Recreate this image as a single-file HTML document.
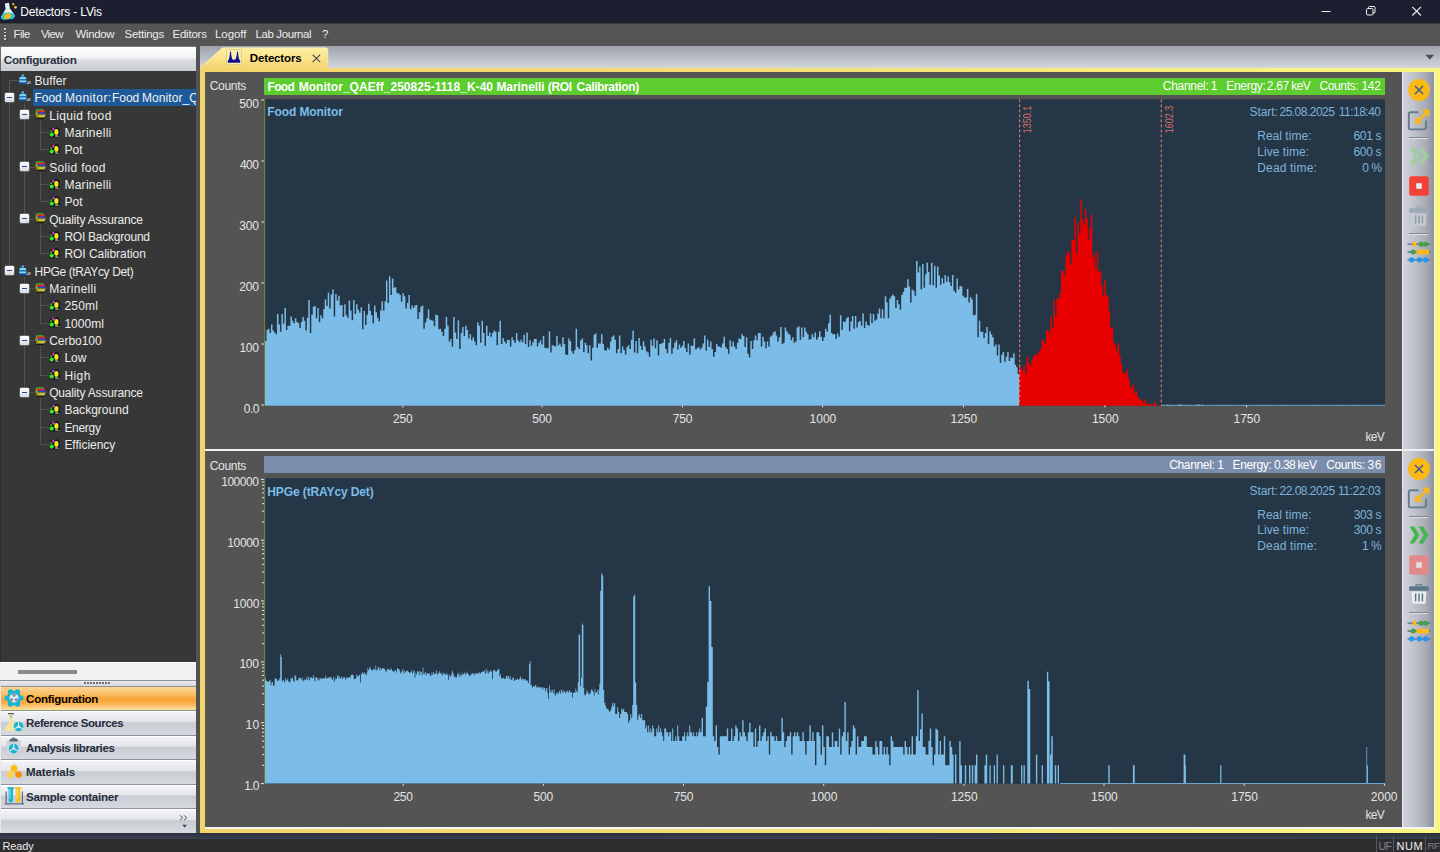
<!DOCTYPE html>
<html lang="en"><head><meta charset="utf-8"><title>Detectors - LVis</title><style>
*{margin:0;padding:0;box-sizing:border-box}
html,body{width:1440px;height:852px;overflow:hidden;background:#545454}
body{font-family:"Liberation Sans",sans-serif;font-size:12px;position:relative}
.ab{position:absolute}
.tx{position:absolute;white-space:nowrap;line-height:16px;height:16px}
</style></head><body>
<div class="ab" style="left:0;top:0;width:1440px;height:22.5px;background:#1b1f2f"></div>
<svg class="ab" style="left:0;top:1px" width="18" height="20" viewBox="0 0 18 20"><path d="M4.800 2.400L9 1.800L9.900 7.600L14.800 14.200Q14.600 17.600 11 18L3.400 18.400Q.6 18.200 1.200 15.600L5.600 8Z" fill="#e4f0f6"/><path d="M2.800 12.400L1.200 15.600Q.6 18.200 3.400 18.400L11 18Q14.400 17.600 14.800 14.400L13.600 12.800Q8 10.400 2.800 12.400Z" fill="#1fc1dd"/><ellipse cx="7.600" cy="15" rx="3.700" ry="2.700" fill="#fdbd16" transform="rotate(-14 7.600 15)"/><path d="M10.200 8.400L13.800 13.200L11 10.400Z" fill="#ffffff"/><circle cx="13.200" cy="3.200" r="1.150" fill="#fdbd16"/><circle cx="15.500" cy="6.300" r="1.400" fill="#fdc825"/></svg>
<svg class="ab" style="left:1310px;top:0" width="130" height="22" viewBox="0 0 130 22"><path d="M11.5 11.5H20.5" stroke="#f2f2f2" stroke-width="1"/><rect x="56.5" y="8.5" width="6.5" height="6.5" rx="1.200" fill="none" stroke="#f2f2f2" stroke-width="1"/><path d="M58.5 8.500V7.500Q58.500 6.500 59.500 6.500H64Q65 6.500 65 7.500V12Q65 13 64 13H63" fill="none" stroke="#f2f2f2" stroke-width="1"/><path d="M102.300 6.800L111 15.500M111 6.800L102.300 15.500" stroke="#f2f2f2" stroke-width="1.100"/></svg>
<div class="ab" style="left:0;top:22.5px;width:1440px;height:23px;background:#555555"></div>
<div class="ab" style="left:0;top:22.5px;width:1440px;height:1px;background:#3e3e3e"></div>
<div class="ab" style="left:3.900px;top:28.2px;width:1.800px;height:1.700px;background:#c9c9c9;box-shadow:.5px .5px 0 #3a3a3a"></div>
<div class="ab" style="left:3.900px;top:31.6px;width:1.800px;height:1.700px;background:#c9c9c9;box-shadow:.5px .5px 0 #3a3a3a"></div>
<div class="ab" style="left:3.900px;top:34.9px;width:1.800px;height:1.700px;background:#c9c9c9;box-shadow:.5px .5px 0 #3a3a3a"></div>
<div class="ab" style="left:3.900px;top:38.2px;width:1.800px;height:1.700px;background:#c9c9c9;box-shadow:.5px .5px 0 #3a3a3a"></div>
<div class="ab" style="left:0;top:46px;width:196.4px;height:25px;background:linear-gradient(#fdfdfd 0%,#f1f2f4 45%,#d9dbe0 55%,#c9ccd2 100%);border-left:1px solid #6a6a6a;border-top:1px solid #787878"></div>
<div class="ab" style="left:0;top:71px;width:196.4px;height:591.4px;background:#373737;border-left:1.400px solid #2a2a2a"></div>
<div class="ab" style="left:195.800px;top:71px;width:1.200px;height:591px;background:#6c6c6c"></div>
<div class="ab" style="left:33px;top:88.6px;width:163.2px;height:17.4px;background:#1e5a99"></div>
<div class="ab" style="left:9.0px;top:80.0px;width:1px;height:190.7px;background:#525252"></div>
<div class="ab" style="left:9.0px;top:80.0px;width:9.0px;height:1px;background:#525252"></div>
<div class="ab" style="left:24.0px;top:103.3px;width:1px;height:115.3px;background:#525252"></div>
<div class="ab" style="left:24.0px;top:276.7px;width:1px;height:115.3px;background:#525252"></div>
<div class="ab" style="left:29.0px;top:114.7px;width:5.0px;height:1px;background:#525252"></div>
<div class="ab" style="left:39.5px;top:132.0px;width:10.5px;height:1px;background:#525252"></div>
<div class="ab" style="left:39.5px;top:149.3px;width:10.5px;height:1px;background:#525252"></div>
<div class="ab" style="left:29.0px;top:166.7px;width:5.0px;height:1px;background:#525252"></div>
<div class="ab" style="left:39.5px;top:184.0px;width:10.5px;height:1px;background:#525252"></div>
<div class="ab" style="left:39.5px;top:201.3px;width:10.5px;height:1px;background:#525252"></div>
<div class="ab" style="left:29.0px;top:218.7px;width:5.0px;height:1px;background:#525252"></div>
<div class="ab" style="left:39.5px;top:236.0px;width:10.5px;height:1px;background:#525252"></div>
<div class="ab" style="left:39.5px;top:253.3px;width:10.5px;height:1px;background:#525252"></div>
<div class="ab" style="left:29.0px;top:288.0px;width:5.0px;height:1px;background:#525252"></div>
<div class="ab" style="left:39.5px;top:305.3px;width:10.5px;height:1px;background:#525252"></div>
<div class="ab" style="left:39.5px;top:322.7px;width:10.5px;height:1px;background:#525252"></div>
<div class="ab" style="left:29.0px;top:340.0px;width:5.0px;height:1px;background:#525252"></div>
<div class="ab" style="left:39.5px;top:357.3px;width:10.5px;height:1px;background:#525252"></div>
<div class="ab" style="left:39.5px;top:374.7px;width:10.5px;height:1px;background:#525252"></div>
<div class="ab" style="left:29.0px;top:392.0px;width:5.0px;height:1px;background:#525252"></div>
<div class="ab" style="left:39.5px;top:409.3px;width:10.5px;height:1px;background:#525252"></div>
<div class="ab" style="left:39.5px;top:426.7px;width:10.5px;height:1px;background:#525252"></div>
<div class="ab" style="left:39.5px;top:444.0px;width:10.5px;height:1px;background:#525252"></div>
<div class="ab" style="left:39.5px;top:120.7px;width:1px;height:28.7px;background:#525252"></div>
<div class="ab" style="left:39.5px;top:172.7px;width:1px;height:28.7px;background:#525252"></div>
<div class="ab" style="left:39.5px;top:224.7px;width:1px;height:28.7px;background:#525252"></div>
<div class="ab" style="left:39.5px;top:294.0px;width:1px;height:28.7px;background:#525252"></div>
<div class="ab" style="left:39.5px;top:346.0px;width:1px;height:28.7px;background:#525252"></div>
<div class="ab" style="left:39.5px;top:398.0px;width:1px;height:46.0px;background:#525252"></div>
<svg class="ab" style="left:17.6px;top:74.1px" width="14" height="12" viewBox="0 0 14 12"><rect x="3.500" y="0.700" width="2.600" height="2.400" rx=".6" fill="#2a86d8"/><rect x="4.100" y="0.500" width="1.400" height="1.200" fill="#8fe6f8"/><path d="M2.300 3.100h5q.9 0 .9 1v1.200H1.400V4.100q0-1 .9-1z" fill="#6fdcf2"/><rect x="1.200" y="5.100" width="7.200" height="1.500" fill="#2e6fd2"/><rect x="1.200" y="6.500" width="7.200" height="1.500" fill="#7fe6f6"/><rect x="1.200" y="7.900" width="7.200" height="1.300" fill="#2e7fd8"/><rect x="1.200" y="9.100" width="7.200" height="1.200" rx=".3" fill="#1f3f9a"/><path d="M8.600 8.800h1.400v-1.600h2.600v2.800h-1v-1.800h-.6v1.800H8.600z" fill="#a9adb3"/></svg>
<div class="ab" style="left:5.0px;top:92.8px;width:9px;height:9px;background:linear-gradient(#ffffff,#d6dae2);border-radius:1px;box-shadow:0 0 0 0.5px #8a8e96"><div class="ab" style="left:2px;top:4px;width:5px;height:1px;background:#2d4a8a"></div></div>
<svg class="ab" style="left:17.6px;top:91.4px" width="14" height="12" viewBox="0 0 14 12"><rect x="3.500" y="0.700" width="2.600" height="2.400" rx=".6" fill="#2a86d8"/><rect x="4.100" y="0.500" width="1.400" height="1.200" fill="#8fe6f8"/><path d="M2.300 3.100h5q.9 0 .9 1v1.200H1.400V4.100q0-1 .9-1z" fill="#6fdcf2"/><rect x="1.200" y="5.100" width="7.200" height="1.500" fill="#2e6fd2"/><rect x="1.200" y="6.500" width="7.200" height="1.500" fill="#7fe6f6"/><rect x="1.200" y="7.900" width="7.200" height="1.300" fill="#2e7fd8"/><rect x="1.200" y="9.100" width="7.200" height="1.200" rx=".3" fill="#1f3f9a"/><path d="M8.600 8.800h1.400v-1.600h2.600v2.800h-1v-1.800h-.6v1.800H8.600z" fill="#a9adb3"/></svg>
<div class="ab" style="left:20.0px;top:110.2px;width:9px;height:9px;background:linear-gradient(#ffffff,#d6dae2);border-radius:1px;box-shadow:0 0 0 0.5px #8a8e96"><div class="ab" style="left:2px;top:4px;width:5px;height:1px;background:#2d4a8a"></div></div>
<svg class="ab" style="left:33.5px;top:108.4px" width="13" height="12" viewBox="0 0 13 12"><path d="M1.600 3.200Q1.600 1.300 3.600 1.300H8.400Q10 1.300 10.400 2.800H3.400V6Z" fill="#35c52e"/><rect x="3" y="2.400" width="8" height="2.300" fill="#e02a20"/><rect x="3.400" y="4.500" width="8.200" height="2.100" fill="#2848d0"/><path d="M0.800 4.800L2.600 9.800H10L12 6.400H4.200L3 4.200Z" fill="#a8a424"/><path d="M0.800 4.800L2.600 9.800H10L10.400 9.100H3.500L1.800 4.500Z" fill="#6f7414"/><path d="M4.600 7.200H11.400L10.400 8.800H5.200Z" fill="#d8c83a"/><path d="M2 10.100H10.200V10.900H2.600Z" fill="#16180a"/></svg>
<svg class="ab" style="left:49.4px;top:126.7px" width="12" height="12" viewBox="0 0 12 12"><path d="M1.600 1.200H5.400L6 0.600H9.400V2H10.600V10.400H0.600V4.600H1.600Z" fill="#141414"/><circle cx="4.400" cy="2.200" r="1.200" fill="#e63ae0"/><circle cx="2.700" cy="7.600" r="2.100" fill="#3be830"/><circle cx="2.200" cy="4.300" r="1" fill="#2fd028"/><ellipse cx="7.400" cy="4.900" rx="2.100" ry="2.900" fill="#ecec20"/><rect x="6.200" y="8.400" width="2.800" height="1.200" fill="#cfcfcf"/><rect x="8.800" y="9.300" width="1.600" height="0.900" fill="#8a8a8a"/></svg>
<svg class="ab" style="left:49.4px;top:144.0px" width="12" height="12" viewBox="0 0 12 12"><path d="M1.600 1.200H5.400L6 0.600H9.400V2H10.600V10.400H0.600V4.600H1.600Z" fill="#141414"/><circle cx="4.400" cy="2.200" r="1.200" fill="#e63ae0"/><circle cx="2.700" cy="7.600" r="2.100" fill="#3be830"/><circle cx="2.200" cy="4.300" r="1" fill="#2fd028"/><ellipse cx="7.400" cy="4.900" rx="2.100" ry="2.900" fill="#ecec20"/><rect x="6.200" y="8.400" width="2.800" height="1.200" fill="#cfcfcf"/><rect x="8.800" y="9.300" width="1.600" height="0.900" fill="#8a8a8a"/></svg>
<div class="ab" style="left:20.0px;top:162.2px;width:9px;height:9px;background:linear-gradient(#ffffff,#d6dae2);border-radius:1px;box-shadow:0 0 0 0.5px #8a8e96"><div class="ab" style="left:2px;top:4px;width:5px;height:1px;background:#2d4a8a"></div></div>
<svg class="ab" style="left:33.5px;top:160.4px" width="13" height="12" viewBox="0 0 13 12"><path d="M1.600 3.200Q1.600 1.300 3.600 1.300H8.400Q10 1.300 10.400 2.800H3.400V6Z" fill="#35c52e"/><rect x="3" y="2.400" width="8" height="2.300" fill="#e02a20"/><rect x="3.400" y="4.500" width="8.200" height="2.100" fill="#2848d0"/><path d="M0.800 4.800L2.600 9.800H10L12 6.400H4.200L3 4.200Z" fill="#a8a424"/><path d="M0.800 4.800L2.600 9.800H10L10.400 9.100H3.500L1.800 4.500Z" fill="#6f7414"/><path d="M4.600 7.200H11.400L10.400 8.800H5.200Z" fill="#d8c83a"/><path d="M2 10.100H10.200V10.900H2.600Z" fill="#16180a"/></svg>
<svg class="ab" style="left:49.4px;top:178.7px" width="12" height="12" viewBox="0 0 12 12"><path d="M1.600 1.200H5.400L6 0.600H9.400V2H10.600V10.400H0.600V4.600H1.600Z" fill="#141414"/><circle cx="4.400" cy="2.200" r="1.200" fill="#e63ae0"/><circle cx="2.700" cy="7.600" r="2.100" fill="#3be830"/><circle cx="2.200" cy="4.300" r="1" fill="#2fd028"/><ellipse cx="7.400" cy="4.900" rx="2.100" ry="2.900" fill="#ecec20"/><rect x="6.200" y="8.400" width="2.800" height="1.200" fill="#cfcfcf"/><rect x="8.800" y="9.300" width="1.600" height="0.900" fill="#8a8a8a"/></svg>
<svg class="ab" style="left:49.4px;top:196.0px" width="12" height="12" viewBox="0 0 12 12"><path d="M1.600 1.200H5.400L6 0.600H9.400V2H10.600V10.400H0.600V4.600H1.600Z" fill="#141414"/><circle cx="4.400" cy="2.200" r="1.200" fill="#e63ae0"/><circle cx="2.700" cy="7.600" r="2.100" fill="#3be830"/><circle cx="2.200" cy="4.300" r="1" fill="#2fd028"/><ellipse cx="7.400" cy="4.900" rx="2.100" ry="2.900" fill="#ecec20"/><rect x="6.200" y="8.400" width="2.800" height="1.200" fill="#cfcfcf"/><rect x="8.800" y="9.300" width="1.600" height="0.900" fill="#8a8a8a"/></svg>
<div class="ab" style="left:20.0px;top:214.2px;width:9px;height:9px;background:linear-gradient(#ffffff,#d6dae2);border-radius:1px;box-shadow:0 0 0 0.5px #8a8e96"><div class="ab" style="left:2px;top:4px;width:5px;height:1px;background:#2d4a8a"></div></div>
<svg class="ab" style="left:33.5px;top:212.4px" width="13" height="12" viewBox="0 0 13 12"><path d="M1.600 3.200Q1.600 1.300 3.600 1.300H8.400Q10 1.300 10.400 2.800H3.400V6Z" fill="#35c52e"/><rect x="3" y="2.400" width="8" height="2.300" fill="#e02a20"/><rect x="3.400" y="4.500" width="8.200" height="2.100" fill="#2848d0"/><path d="M0.800 4.800L2.600 9.800H10L12 6.400H4.200L3 4.200Z" fill="#a8a424"/><path d="M0.800 4.800L2.600 9.800H10L10.400 9.100H3.500L1.800 4.500Z" fill="#6f7414"/><path d="M4.600 7.200H11.400L10.400 8.800H5.200Z" fill="#d8c83a"/><path d="M2 10.100H10.200V10.900H2.600Z" fill="#16180a"/></svg>
<svg class="ab" style="left:49.4px;top:230.7px" width="12" height="12" viewBox="0 0 12 12"><path d="M1.600 1.200H5.400L6 0.600H9.400V2H10.600V10.400H0.600V4.600H1.600Z" fill="#141414"/><circle cx="4.400" cy="2.200" r="1.200" fill="#e63ae0"/><circle cx="2.700" cy="7.600" r="2.100" fill="#3be830"/><circle cx="2.200" cy="4.300" r="1" fill="#2fd028"/><ellipse cx="7.400" cy="4.900" rx="2.100" ry="2.900" fill="#ecec20"/><rect x="6.200" y="8.400" width="2.800" height="1.200" fill="#cfcfcf"/><rect x="8.800" y="9.300" width="1.600" height="0.900" fill="#8a8a8a"/></svg>
<svg class="ab" style="left:49.4px;top:248.0px" width="12" height="12" viewBox="0 0 12 12"><path d="M1.600 1.200H5.400L6 0.600H9.400V2H10.600V10.400H0.600V4.600H1.600Z" fill="#141414"/><circle cx="4.400" cy="2.200" r="1.200" fill="#e63ae0"/><circle cx="2.700" cy="7.600" r="2.100" fill="#3be830"/><circle cx="2.200" cy="4.300" r="1" fill="#2fd028"/><ellipse cx="7.400" cy="4.900" rx="2.100" ry="2.900" fill="#ecec20"/><rect x="6.200" y="8.400" width="2.800" height="1.200" fill="#cfcfcf"/><rect x="8.800" y="9.300" width="1.600" height="0.900" fill="#8a8a8a"/></svg>
<div class="ab" style="left:5.0px;top:266.2px;width:9px;height:9px;background:linear-gradient(#ffffff,#d6dae2);border-radius:1px;box-shadow:0 0 0 0.5px #8a8e96"><div class="ab" style="left:2px;top:4px;width:5px;height:1px;background:#2d4a8a"></div></div>
<svg class="ab" style="left:17.6px;top:264.8px" width="14" height="12" viewBox="0 0 14 12"><rect x="3.500" y="0.700" width="2.600" height="2.400" rx=".6" fill="#2a86d8"/><rect x="4.100" y="0.500" width="1.400" height="1.200" fill="#8fe6f8"/><path d="M2.300 3.100h5q.9 0 .9 1v1.200H1.400V4.100q0-1 .9-1z" fill="#6fdcf2"/><rect x="1.200" y="5.100" width="7.200" height="1.500" fill="#2e6fd2"/><rect x="1.200" y="6.500" width="7.200" height="1.500" fill="#7fe6f6"/><rect x="1.200" y="7.900" width="7.200" height="1.300" fill="#2e7fd8"/><rect x="1.200" y="9.100" width="7.200" height="1.200" rx=".3" fill="#1f3f9a"/><path d="M8.600 8.800h1.400v-1.600h2.600v2.800h-1v-1.800h-.6v1.800H8.600z" fill="#a9adb3"/></svg>
<div class="ab" style="left:20.0px;top:283.5px;width:9px;height:9px;background:linear-gradient(#ffffff,#d6dae2);border-radius:1px;box-shadow:0 0 0 0.5px #8a8e96"><div class="ab" style="left:2px;top:4px;width:5px;height:1px;background:#2d4a8a"></div></div>
<svg class="ab" style="left:33.5px;top:281.7px" width="13" height="12" viewBox="0 0 13 12"><path d="M1.600 3.200Q1.600 1.300 3.600 1.300H8.400Q10 1.300 10.400 2.800H3.400V6Z" fill="#35c52e"/><rect x="3" y="2.400" width="8" height="2.300" fill="#e02a20"/><rect x="3.400" y="4.500" width="8.200" height="2.100" fill="#2848d0"/><path d="M0.800 4.800L2.600 9.800H10L12 6.400H4.200L3 4.200Z" fill="#a8a424"/><path d="M0.800 4.800L2.600 9.800H10L10.400 9.100H3.500L1.800 4.500Z" fill="#6f7414"/><path d="M4.600 7.200H11.400L10.400 8.800H5.200Z" fill="#d8c83a"/><path d="M2 10.100H10.200V10.900H2.600Z" fill="#16180a"/></svg>
<svg class="ab" style="left:49.4px;top:300.0px" width="12" height="12" viewBox="0 0 12 12"><path d="M1.600 1.200H5.400L6 0.600H9.400V2H10.600V10.400H0.600V4.600H1.600Z" fill="#141414"/><circle cx="4.400" cy="2.200" r="1.200" fill="#e63ae0"/><circle cx="2.700" cy="7.600" r="2.100" fill="#3be830"/><circle cx="2.200" cy="4.300" r="1" fill="#2fd028"/><ellipse cx="7.400" cy="4.900" rx="2.100" ry="2.900" fill="#ecec20"/><rect x="6.200" y="8.400" width="2.800" height="1.200" fill="#cfcfcf"/><rect x="8.800" y="9.300" width="1.600" height="0.900" fill="#8a8a8a"/></svg>
<svg class="ab" style="left:49.4px;top:317.4px" width="12" height="12" viewBox="0 0 12 12"><path d="M1.600 1.200H5.400L6 0.600H9.400V2H10.600V10.400H0.600V4.600H1.600Z" fill="#141414"/><circle cx="4.400" cy="2.200" r="1.200" fill="#e63ae0"/><circle cx="2.700" cy="7.600" r="2.100" fill="#3be830"/><circle cx="2.200" cy="4.300" r="1" fill="#2fd028"/><ellipse cx="7.400" cy="4.900" rx="2.100" ry="2.900" fill="#ecec20"/><rect x="6.200" y="8.400" width="2.800" height="1.200" fill="#cfcfcf"/><rect x="8.800" y="9.300" width="1.600" height="0.900" fill="#8a8a8a"/></svg>
<div class="ab" style="left:20.0px;top:335.5px;width:9px;height:9px;background:linear-gradient(#ffffff,#d6dae2);border-radius:1px;box-shadow:0 0 0 0.5px #8a8e96"><div class="ab" style="left:2px;top:4px;width:5px;height:1px;background:#2d4a8a"></div></div>
<svg class="ab" style="left:33.5px;top:333.7px" width="13" height="12" viewBox="0 0 13 12"><path d="M1.600 3.200Q1.600 1.300 3.600 1.300H8.400Q10 1.300 10.400 2.800H3.400V6Z" fill="#35c52e"/><rect x="3" y="2.400" width="8" height="2.300" fill="#e02a20"/><rect x="3.400" y="4.500" width="8.200" height="2.100" fill="#2848d0"/><path d="M0.800 4.800L2.600 9.800H10L12 6.400H4.200L3 4.200Z" fill="#a8a424"/><path d="M0.800 4.800L2.600 9.800H10L10.400 9.100H3.500L1.800 4.500Z" fill="#6f7414"/><path d="M4.600 7.200H11.400L10.400 8.800H5.200Z" fill="#d8c83a"/><path d="M2 10.100H10.200V10.900H2.600Z" fill="#16180a"/></svg>
<svg class="ab" style="left:49.4px;top:352.0px" width="12" height="12" viewBox="0 0 12 12"><path d="M1.600 1.200H5.400L6 0.600H9.400V2H10.600V10.400H0.600V4.600H1.600Z" fill="#141414"/><circle cx="4.400" cy="2.200" r="1.200" fill="#e63ae0"/><circle cx="2.700" cy="7.600" r="2.100" fill="#3be830"/><circle cx="2.200" cy="4.300" r="1" fill="#2fd028"/><ellipse cx="7.400" cy="4.900" rx="2.100" ry="2.900" fill="#ecec20"/><rect x="6.200" y="8.400" width="2.800" height="1.200" fill="#cfcfcf"/><rect x="8.800" y="9.300" width="1.600" height="0.900" fill="#8a8a8a"/></svg>
<svg class="ab" style="left:49.4px;top:369.4px" width="12" height="12" viewBox="0 0 12 12"><path d="M1.600 1.200H5.400L6 0.600H9.400V2H10.600V10.400H0.600V4.600H1.600Z" fill="#141414"/><circle cx="4.400" cy="2.200" r="1.200" fill="#e63ae0"/><circle cx="2.700" cy="7.600" r="2.100" fill="#3be830"/><circle cx="2.200" cy="4.300" r="1" fill="#2fd028"/><ellipse cx="7.400" cy="4.900" rx="2.100" ry="2.900" fill="#ecec20"/><rect x="6.200" y="8.400" width="2.800" height="1.200" fill="#cfcfcf"/><rect x="8.800" y="9.300" width="1.600" height="0.900" fill="#8a8a8a"/></svg>
<div class="ab" style="left:20.0px;top:387.5px;width:9px;height:9px;background:linear-gradient(#ffffff,#d6dae2);border-radius:1px;box-shadow:0 0 0 0.5px #8a8e96"><div class="ab" style="left:2px;top:4px;width:5px;height:1px;background:#2d4a8a"></div></div>
<svg class="ab" style="left:33.5px;top:385.7px" width="13" height="12" viewBox="0 0 13 12"><path d="M1.600 3.200Q1.600 1.300 3.600 1.300H8.400Q10 1.300 10.400 2.800H3.400V6Z" fill="#35c52e"/><rect x="3" y="2.400" width="8" height="2.300" fill="#e02a20"/><rect x="3.400" y="4.500" width="8.200" height="2.100" fill="#2848d0"/><path d="M0.800 4.800L2.600 9.800H10L12 6.400H4.200L3 4.200Z" fill="#a8a424"/><path d="M0.800 4.800L2.600 9.800H10L10.400 9.100H3.500L1.800 4.500Z" fill="#6f7414"/><path d="M4.600 7.200H11.400L10.400 8.800H5.200Z" fill="#d8c83a"/><path d="M2 10.100H10.200V10.900H2.600Z" fill="#16180a"/></svg>
<svg class="ab" style="left:49.4px;top:404.0px" width="12" height="12" viewBox="0 0 12 12"><path d="M1.600 1.200H5.400L6 0.600H9.400V2H10.600V10.400H0.600V4.600H1.600Z" fill="#141414"/><circle cx="4.400" cy="2.200" r="1.200" fill="#e63ae0"/><circle cx="2.700" cy="7.600" r="2.100" fill="#3be830"/><circle cx="2.200" cy="4.300" r="1" fill="#2fd028"/><ellipse cx="7.400" cy="4.900" rx="2.100" ry="2.900" fill="#ecec20"/><rect x="6.200" y="8.400" width="2.800" height="1.200" fill="#cfcfcf"/><rect x="8.800" y="9.300" width="1.600" height="0.900" fill="#8a8a8a"/></svg>
<svg class="ab" style="left:49.4px;top:421.4px" width="12" height="12" viewBox="0 0 12 12"><path d="M1.600 1.200H5.400L6 0.600H9.400V2H10.600V10.400H0.600V4.600H1.600Z" fill="#141414"/><circle cx="4.400" cy="2.200" r="1.200" fill="#e63ae0"/><circle cx="2.700" cy="7.600" r="2.100" fill="#3be830"/><circle cx="2.200" cy="4.300" r="1" fill="#2fd028"/><ellipse cx="7.400" cy="4.900" rx="2.100" ry="2.900" fill="#ecec20"/><rect x="6.200" y="8.400" width="2.800" height="1.200" fill="#cfcfcf"/><rect x="8.800" y="9.300" width="1.600" height="0.900" fill="#8a8a8a"/></svg>
<svg class="ab" style="left:49.4px;top:438.7px" width="12" height="12" viewBox="0 0 12 12"><path d="M1.600 1.200H5.400L6 0.600H9.400V2H10.600V10.400H0.600V4.600H1.600Z" fill="#141414"/><circle cx="4.400" cy="2.200" r="1.200" fill="#e63ae0"/><circle cx="2.700" cy="7.600" r="2.100" fill="#3be830"/><circle cx="2.200" cy="4.300" r="1" fill="#2fd028"/><ellipse cx="7.400" cy="4.900" rx="2.100" ry="2.900" fill="#ecec20"/><rect x="6.200" y="8.400" width="2.800" height="1.200" fill="#cfcfcf"/><rect x="8.800" y="9.300" width="1.600" height="0.900" fill="#8a8a8a"/></svg>
<div class="ab" style="left:0;top:662.4px;width:196.4px;height:18px;background:#f1f1f2;border-top:1px solid #fff"></div>
<div class="ab" style="left:17.8px;top:669.6px;width:59.4px;height:4px;background:#8b8b8b"></div>
<div class="ab" style="left:0;top:680.2px;width:196.4px;height:6.2px;background:linear-gradient(#8e929a 0,#8e929a 1px,#eceef1 1px,#d4d7dc 100%)"></div>
<div class="ab" style="left:84px;top:682px;width:2px;height:2px;background:#6b707c"></div>
<div class="ab" style="left:87px;top:682px;width:2px;height:2px;background:#6b707c"></div>
<div class="ab" style="left:90px;top:682px;width:2px;height:2px;background:#6b707c"></div>
<div class="ab" style="left:93px;top:682px;width:2px;height:2px;background:#6b707c"></div>
<div class="ab" style="left:96px;top:682px;width:2px;height:2px;background:#6b707c"></div>
<div class="ab" style="left:99px;top:682px;width:2px;height:2px;background:#6b707c"></div>
<div class="ab" style="left:102px;top:682px;width:2px;height:2px;background:#6b707c"></div>
<div class="ab" style="left:105px;top:682px;width:2px;height:2px;background:#6b707c"></div>
<div class="ab" style="left:108px;top:682px;width:2px;height:2px;background:#6b707c"></div>
<div class="ab" style="left:0;top:686.2px;width:196.4px;height:23.600px;background:linear-gradient(#fcd597 0%,#fbbd63 35%,#f9a231 55%,#fbb95a 80%,#fddc9c 100%);border-top:1px solid #8e929a;border-bottom:1px solid #f3e28a"></div>
<div class="ab" style="left:0;top:710.4px;width:196.4px;height:24.450px;background:linear-gradient(#f4f5f7 0%,#e4e6ea 42%,#c9ccd3 50%,#d6d9de 100%);border-top:1px solid #8e929a;box-shadow:inset 0 1px 0 #fff"></div>
<div class="ab" style="left:0;top:734.9px;width:196.4px;height:24.450px;background:linear-gradient(#f4f5f7 0%,#e4e6ea 42%,#c9ccd3 50%,#d6d9de 100%);border-top:1px solid #8e929a;box-shadow:inset 0 1px 0 #fff"></div>
<div class="ab" style="left:0;top:759.3px;width:196.4px;height:24.450px;background:linear-gradient(#f4f5f7 0%,#e4e6ea 42%,#c9ccd3 50%,#d6d9de 100%);border-top:1px solid #8e929a;box-shadow:inset 0 1px 0 #fff"></div>
<div class="ab" style="left:0;top:783.8px;width:196.4px;height:24.450px;background:linear-gradient(#f4f5f7 0%,#e4e6ea 42%,#c9ccd3 50%,#d6d9de 100%);border-top:1px solid #8e929a;box-shadow:inset 0 1px 0 #fff"></div>
<div class="ab" style="left:0;top:808.200px;width:196.4px;height:24.600px;background:linear-gradient(#f4f5f7 0%,#e4e6ea 42%,#c9ccd3 50%,#d9dce1 100%);border-top:1px solid #8e929a;box-shadow:inset 0 1px 0 #fff"></div>
<div class="ab" style="left:0;top:686px;width:1.200px;height:147px;background:#e9ebee"></div>
<svg class="ab" style="left:3.5px;top:688px" width="20" height="20" viewBox="0 0 20 20"><g fill="#19b5d4"><circle cx="10" cy="10" r="7.2"/><circle cx="17.00" cy="10.00" r="2.6"/><circle cx="13.50" cy="16.06" r="2.6"/><circle cx="6.50" cy="16.06" r="2.6"/><circle cx="3.00" cy="10.00" r="2.6"/><circle cx="6.50" cy="3.94" r="2.6"/><circle cx="13.50" cy="3.94" r="2.6"/></g><circle cx="10" cy="10" r="4.6" fill="#e9eef2"/><g fill="#8a98a6"><path d="M10 10 L7.3 6.2 A4.6 4.6 0 0 1 12.7 6.2 Z"/><path d="M10 10 L14.6 10.6 A4.6 4.6 0 0 1 11.9 14.2 Z"/><path d="M10 10 L8.1 14.2 A4.6 4.6 0 0 1 5.4 10.6 Z"/></g><circle cx="10" cy="10" r="1.2" fill="#e9eef2"/></svg>
<svg class="ab" style="left:3px;top:712px" width="22" height="21" viewBox="0 0 22 21"><rect x="5" y="1" width="6" height="1.4" fill="#5a6470"/><rect x="6.6" y="2.4" width="2.8" height="2" fill="#f0d46a"/><rect x="7.4" y="4.4" width="1.6" height="1.2" fill="#5a6470"/><path d="M6.6 5.8h3v3.4l4.6 8.2q0.6 1.6-1.2 1.6H2.6q-1.8 0-1.2-1.6L6.6 9.2z" fill="#f7e3a0"/><circle cx="15.5" cy="14.5" r="4.8" fill="#19b5d4"/><g fill="#e9f6fa"><path d="M15.5 14.5 L13 10.6 A4.6 4.6 0 0 1 18 10.6 Z" opacity="0"/></g><g stroke="#e9f6fa" stroke-width="1.1"><path d="M15.5 14.5L15.5 9.8M15.5 14.5L11.4 16.9M15.5 14.5L19.6 16.9"/></g><circle cx="15.5" cy="14.5" r="1.3" fill="#e9f6fa"/></svg>
<svg class="ab" style="left:4px;top:736px" width="20" height="22" viewBox="0 0 20 22"><rect x="2.4" y="4.2" width="14.6" height="16.4" rx="1.6" fill="#cfd3da"/><path d="M5.4 4.6 Q5.4 2.4 8 2.4 Q9.7 0.6 11.4 2.4 Q14 2.4 14 4.6 Q14 5.6 13 5.6 H6.4 Q5.4 5.6 5.4 4.6Z" fill="#596a7a"/><circle cx="9.7" cy="12.6" r="4.8" fill="#19b5d4"/><g stroke="#dfe4ea" stroke-width="1.2"><path d="M9.7 12.6L9.7 7.8M9.7 12.6L5.6 15M9.7 12.6L13.8 15"/></g><circle cx="9.7" cy="12.6" r="1.3" fill="#dfe4ea"/></svg>
<svg class="ab" style="left:3.5px;top:761px" width="21" height="21" viewBox="0 0 21 21"><g stroke="#c9ccd2" stroke-width="0.9"><path d="M10 2v3M3 17.5l2-2M16.5 17.5l-1.6-2M1.5 12l2 .6M19 11l-2 .8M10 9.5l-3 3M10 9.5l3.5 3"/></g><circle cx="10" cy="7.4" r="3.5" fill="#fdbd16"/><circle cx="6.2" cy="13.6" r="3.5" fill="#fdd24a"/><circle cx="14.6" cy="13.6" r="3.3" fill="#fb8c0a"/></svg>
<svg class="ab" style="left:3.5px;top:785.5px" width="21" height="20" viewBox="0 0 21 20"><g fill="none" stroke="#5a6b7b" stroke-width="1.2"><path d="M2.2 5.4V17.6M18.4 5.4V17.6M0.6 17.8H20"/></g><rect x="3.6" y="1.2" width="6.4" height="1.8" fill="#19b5d4"/><path d="M4.6 3h4.4v11.2a2.2 2.2 0 0 1-4.4 0z" fill="#19b5d4"/><rect x="10.8" y="1.2" width="6.4" height="1.8" fill="#fdbd16"/><path d="M11.8 3h4.4v11.2a2.2 2.2 0 0 1-4.4 0z" fill="#fdbd16"/><rect x="5.4" y="3" width="1.2" height="10" fill="#7fdcee"/><rect x="12.6" y="3" width="1.2" height="10" fill="#fee08a"/></svg>
<svg class="ab" style="left:178px;top:814px" width="12" height="16" viewBox="0 0 12 16"><path d="M2.2 1.400L4.600 3.800 2.200 6.200M6.200 1.400L8.600 3.800 6.200 6.200" fill="none" stroke="#3c4150" stroke-width="1"/><path d="M4.200 10.800H9L6.600 13.400Z" fill="#3c4150"/></svg>
<div class="ab" style="left:196.4px;top:45.5px;width:4.200px;height:788px;background:#535353"></div>
<div class="ab" style="left:200.4px;top:45.5px;width:1239.6px;height:23px;background:linear-gradient(#9ea2ac 0%,#aeb2bb 30%,#c2c5cd 65%,#d2d5da 94%,#eceef1 96%,#eceef1 100%)"></div>
<svg class="ab" style="left:1424px;top:53px" width="12" height="8" viewBox="0 0 12 8"><path d="M1.400 1.800H10.200L5.800 6.400Z" fill="#474b55"/></svg>
<svg class="ab" style="left:200px;top:46px" width="130" height="24" viewBox="0 0 130 24"><defs><linearGradient id="tg" x1="0" y1="0" x2="0" y2="1"><stop offset="0" stop-color="#fdf0a4"/><stop offset=".45" stop-color="#fae48c"/><stop offset="1" stop-color="#f3d36c"/></linearGradient></defs><path d="M0.600 24V21.500L21.500 2.600Q22.500 1.800 24 1.800H126Q127.800 1.800 127.800 3.600V24Z" fill="url(#tg)"/><path d="M0.600 21.500L21.500 2.600Q22.500 1.800 24 1.800H126Q127.800 1.800 127.800 3.600V21" fill="none" stroke="#fff7c8" stroke-width="0.8" opacity=".7"/></svg>
<svg class="ab" style="left:226px;top:49px" width="16" height="16" viewBox="0 0 16 16"><rect x=".4" y=".4" width="15.200" height="15.200" rx="1.200" fill="#fbeeb4" stroke="#d9c47a" stroke-width=".8"/><path d="M1.800 13.800V11.600Q3.500 10.800 4.100 2.600H4.900Q5.500 10.200 7 10.800Q7.700 11 8 10.200Q8.300 11 9 10.800Q10.500 10.200 11.100 2.600H11.900Q12.500 10.800 14.200 11.600V13.800Z" fill="#10128a"/></svg>
<svg class="ab" style="left:310.500px;top:52.500px" width="11" height="11" viewBox="0 0 11 11"><path d="M1.600 1.600L9.200 9.200M9.200 1.600L1.600 9.200" stroke="#4a4a4a" stroke-width="1.200"/></svg>
<div class="ab" style="left:200.300px;top:68.400px;width:1239.700px;height:764.400px;background:linear-gradient(90deg,#f3d56c 0%,#f4da72 35%,#f7ec7c 75%,#faf680 100%)"></div>
<div class="ab" style="left:205.200px;top:72.200px;width:1230.300px;height:756.800px;background:#f4f4f2"></div>
<div class="ab" style="left:205.200px;top:72.200px;width:1229.100px;height:754.700px;background:#545454"></div>
<div class="ab" style="left:205.200px;top:449.300px;width:1228.800px;height:2.100px;background:#f0f0f0"></div>
<div class="ab" style="left:1401.800px;top:72.2px;width:32.500px;height:377.1px;background:linear-gradient(90deg,#e6e8ec 0,#e6e8ec 1px,#d0d3d9 1.500px,#c1c4cc 35%,#a7abb6 75%,#8d929f 100%)"></div>
<div class="ab" style="left:1401.800px;top:451.4px;width:32.500px;height:375.2px;background:linear-gradient(90deg,#e6e8ec 0,#e6e8ec 1px,#d0d3d9 1.500px,#c1c4cc 35%,#a7abb6 75%,#8d929f 100%)"></div>
<div class="ab" style="left:263.800px;top:77.800px;width:1121.200px;height:17px;background:#5ccc2e"></div>
<div class="ab" style="left:263.800px;top:456.400px;width:1121.200px;height:17px;background:#7a8eac"></div>
<svg class="ab" style="left:0;top:0" width="1440" height="852" viewBox="0 0 1440 852" shape-rendering="auto">
<rect x="264.6" y="99.2" width="1120.4" height="306.600" fill="#253746"/>
<rect x="264.6" y="478.2" width="1120.4" height="305.6" fill="#253746"/>
<rect x="264.2" y="99.2" width="1" height="306.4" fill="#7c8a2e"/>
<rect x="264.2" y="478.2" width="1" height="305.6" fill="#7c8a2e"/>
<path d="M265.00 405.7V340.9H266.49V329.9H267.99V328.7H269.48V333.0H270.97V324.4H272.47V330.5H273.96V332.4H275.45V334.2H276.95V314.1H278.44V324.4H279.93V331.8H281.43V314.1H282.92V323.8H284.41V307.9H285.91V329.9H287.40V325.7H288.89V325.7H290.39V316.5H291.88V320.8H293.37V323.2H294.87V318.3H296.36V322.0H297.85V323.2H299.35V328.1H300.84V322.0H302.33V317.1H303.83V320.8H305.32V330.5H306.81V317.7H308.31V300.0H309.80V333.0H311.29V314.7H312.79V306.7H314.28V306.1H315.77V318.3H317.27V307.9H318.76V322.0H320.25V315.3H321.75V318.3H323.24V309.2H324.73V299.4H326.23V306.1H327.72V292.7H329.21V308.6H330.71V294.5H332.20V289.6H333.69V316.5H335.19V293.9H336.68V300.6H338.17V295.7H339.67V305.5H341.16V304.9H342.65V317.1H344.15V304.3H345.64V315.3H347.13V317.7H348.63V300.6H350.12V310.4H351.61V320.2H353.11V300.0H354.60V314.1H356.09V304.3H357.59V309.8H359.08V312.8H360.57V307.3H362.07V329.3H363.56V311.0H365.05V325.0H366.55V314.7H368.04V303.7H369.53V311.0H371.03V315.3H372.52V323.2H374.01V305.5H375.51V312.2H377.00V317.7H378.49V321.4H379.99V310.4H381.48V301.2H382.97V310.4H384.47V301.2H385.96V280.4H387.45V303.1H388.95V276.2H390.44V295.1H391.93V278.6H393.43V287.8H394.92V287.2H396.41V293.3H397.91V293.3H399.40V295.1H400.89V301.8H402.39V293.3H403.88V296.3H405.37V308.6H406.87V303.1H408.36V295.1H409.85V309.2H411.35V305.5H412.84V307.9H414.33V305.5H415.83V304.9H417.32V318.9H418.81V312.2H420.31V306.7H421.80V305.5H423.29V328.7H424.79V322.6H426.28V318.3H427.77V309.2H429.27V319.5H430.76V320.2H432.25V320.8H433.75V326.3H435.24V314.7H436.73V315.3H438.23V329.3H439.72V328.7H441.21V331.8H442.71V336.0H444.20V328.7H445.69V317.1H447.19V325.7H448.68V341.5H450.17V339.1H451.67V346.4H453.16V317.1H454.65V332.4H456.15V339.1H457.64V320.2H459.13V348.9H460.63V333.0H462.12V326.9H463.61V336.0H465.11V325.7H466.60V329.9H468.09V338.5H469.59V334.2H471.08V340.3H472.57V337.3H474.07V341.5H475.56V345.2H477.05V322.6H478.55V325.7H480.04V342.8H481.53V320.8H483.03V333.0H484.52V345.8H486.01V325.7H487.51V336.0H489.00V332.4H490.49V336.7H491.99V333.0H493.48V330.5H494.97V331.8H496.47V345.2H497.96V331.8H499.45V320.8H500.95V344.0H502.44V337.9H503.93V341.5H505.43V343.4H506.92V339.7H508.41V340.3H509.91V346.4H511.40V337.3H512.89V340.3H514.39V342.8H515.88V333.0H517.37V340.3H518.87V342.2H520.36V339.7H521.85V342.2H523.35V334.8H524.84V344.0H526.33V332.4H527.83V347.0H529.32V340.3H530.81V345.8H532.31V342.2H533.80V339.1H535.29V339.1H536.79V346.4H538.28V342.8H539.77V340.3H541.27V344.6H542.76V336.0H544.25V347.7H545.75V348.3H547.24V348.3H548.73V331.2H550.23V352.5H551.72V345.2H553.21V345.8H554.71V346.4H556.20V336.0H557.69V345.2H559.19V343.4H560.68V346.4H562.17V337.3H563.67V344.0H565.16V354.4H566.65V355.0H568.15V338.5H569.64V340.9H571.13V351.3H572.63V353.8H574.12V350.1H575.61V328.7H577.11V347.0H578.60V348.9H580.09V340.3H581.59V338.5H583.08V351.9H584.57V342.8H586.07V345.2H587.56V353.2H589.05V345.2H590.55V360.5H592.04V347.7H593.53V334.8H595.03V333.6H596.52V347.7H598.01V343.4H599.51V343.4H601.00V334.2H602.49V344.0H603.99V350.1H605.48V350.7H606.97V347.7H608.47V349.5H609.96V341.5H611.45V336.7H612.95V335.4H614.44V339.7H615.93V353.2H617.43V348.9H618.92V335.4H620.41V353.2H621.91V346.4H623.40V350.1H624.89V354.4H626.39V347.0H627.88V345.2H629.37V348.9H630.87V339.7H632.36V330.5H633.85V352.5H635.35V340.9H636.84V353.2H638.33V337.9H639.83V345.8H641.32V350.1H642.81V341.5H644.31V346.4H645.80V351.3H647.29V352.5H648.79V356.8H650.28V339.7H651.77V345.8H653.27V338.5H654.76V348.3H656.25V340.3H657.75V355.6H659.24V344.0H660.73V343.4H662.23V342.8H663.72V339.1H665.21V348.9H666.71V353.2H668.20V342.8H669.69V337.9H671.19V353.8H672.68V348.3H674.17V342.8H675.67V340.3H677.16V349.5H678.65V344.6H680.15V347.7H681.64V345.8H683.13V340.9H684.63V348.3H686.12V351.9H687.61V343.4H689.11V354.4H690.60V345.8H692.09V345.8H693.59V338.5H695.08V349.5H696.57V348.3H698.07V347.0H699.56V349.5H701.05V347.7H702.55V343.4H704.04V335.4H705.53V350.7H707.03V339.7H708.52V347.0H710.01V341.5H711.51V348.9H713.00V356.8H714.49V351.9H715.99V344.0H717.48V346.4H718.97V346.4H720.47V347.7H721.96V343.4H723.45V336.7H724.95V347.0H726.44V348.9H727.93V353.8H729.43V340.3H730.92V346.4H732.41V341.5H733.91V346.4H735.40V348.9H736.89V342.8H738.39V338.5H739.88V339.1H741.37V334.2H742.87V336.0H744.36V347.0H745.85V337.3H747.35V353.8H748.84V357.4H750.33V340.9H751.83V348.9H753.32V340.3H754.81V335.4H756.31V340.3H757.80V333.0H759.29V333.0H760.79V346.4H762.28V336.7H763.77V341.5H765.27V348.3H766.76V341.5H768.25V346.4H769.75V336.7H771.24V335.4H772.73V332.4H774.23V331.2H775.72V335.4H777.21V341.5H778.71V337.3H780.20V326.9H781.69V344.0H783.19V342.8H784.68V327.5H786.17V331.2H787.67V333.6H789.16V334.8H790.65V340.3H792.15V337.3H793.64V342.8H795.13V341.5H796.63V327.5H798.12V326.3H799.61V339.7H801.11V327.5H802.60V337.3H804.09V327.5H805.59V331.8H807.08V334.2H808.57V339.7H810.07V339.1H811.56V334.2H813.05V337.3H814.55V332.4H816.04V339.7H817.53V337.3H819.03V331.2H820.52V336.7H822.01V340.9H823.51V337.3H825.00V328.7H826.49V331.8H827.99V323.2H829.48V314.7H830.97V333.0H832.47V334.2H833.96V334.2H835.45V339.1H836.95V333.6H838.44V336.7H839.93V315.3H841.43V329.9H842.92V321.4H844.41V322.0H845.91V318.3H847.40V317.1H848.89V331.2H850.39V321.4H851.88V315.9H853.37V328.7H854.87V315.9H856.36V327.5H857.85V322.0H859.35V320.8H860.84V325.7H862.33V313.4H863.83V328.1H865.32V321.4H866.81V325.0H868.31V325.7H869.80V313.4H871.29V323.2H872.79V314.1H874.28V320.8H875.77V319.5H877.27V313.4H878.76V308.6H880.25V318.3H881.75V309.2H883.24V318.3H884.73V296.3H886.23V302.4H887.72V318.3H889.21V298.8H890.71V296.3H892.20V294.5H893.69V296.3H895.19V307.9H896.68V300.0H898.17V304.3H899.67V309.8H901.16V295.1H902.65V292.1H904.15V287.8H905.64V287.8H907.13V279.2H908.63V286.6H910.12V302.4H911.61V289.6H913.11V290.8H914.60V295.7H916.09V260.9H917.59V272.5H919.08V266.4H920.57V289.6H922.07V263.9H923.56V287.8H925.05V274.3H926.55V262.7H928.04V271.9H929.53V284.7H931.03V262.7H932.52V285.3H934.01V265.8H935.51V287.8H937.00V266.4H938.49V275.6H939.99V284.7H941.48V278.0H942.97V283.5H944.47V274.9H945.96V281.7H947.45V276.2H948.95V282.3H950.44V285.9H951.93V274.9H953.43V290.8H954.92V292.7H956.41V278.6H957.91V289.6H959.40V285.9H960.89V286.6H962.39V295.7H963.88V297.6H965.37V297.6H966.87V289.0H968.36V302.4H969.85V296.9H971.35V299.4H972.84V315.3H974.33V314.7H975.83V293.9H977.32V337.3H978.81V320.8H980.31V331.8H981.80V331.8H983.29V337.9H984.79V333.0H986.28V326.9H987.77V344.0H989.27V331.2H990.76V334.2H992.25V337.3H993.75V346.4H995.24V344.6H996.73V355.6H998.23V344.6H999.72V362.9H1001.21V354.4H1002.71V351.9H1004.20V361.7H1005.69V356.8H1007.19V351.9H1008.68V361.1H1010.17V357.4H1011.67V358.0H1013.16V353.2H1014.65V364.8H1016.15V367.2H1017.64V373.9H1019.13V405.7ZM1162.49 405.7V405.1H1163.99V405.7ZM1166.97 405.7V404.5H1168.47V405.7ZM1169.96 405.7V405.1H1171.45V405.1H1172.95V405.7ZM1177.43 405.7V405.1H1178.92V404.5H1180.41V404.5H1181.91V405.1H1183.40V405.7ZM1184.89 405.7V405.1H1186.39V405.7ZM1187.88 405.7V405.1H1189.37V405.1H1190.87V405.7ZM1195.35 405.7V405.1H1196.84V404.5H1198.33V404.5H1199.83V405.7ZM1201.32 405.7V404.5H1202.81V405.7ZM1216.25 405.7V405.1H1217.75V405.7ZM1219.24 405.7V405.1H1220.73V405.7ZM1225.21 405.7V405.1H1226.71V405.7ZM1243.13 405.7V405.1H1244.63V405.7ZM1256.57 405.7V405.1H1258.07V405.7ZM1268.52 405.7V405.1H1270.01V405.7ZM1281.96 405.7V405.1H1283.45V405.7ZM1313.32 405.7V405.1H1314.81V405.1H1316.31V405.7ZM1341.69 405.7V405.1H1343.19V405.7ZM1358.12 405.7V405.1H1359.61V405.7Z" fill="#7bbde8"/>
<path d="M1019.13 405.7V365.4H1020.63V368.4H1022.12V370.3H1023.61V365.4H1025.11V373.9H1026.60V356.8H1028.09V362.3H1029.59V366.0H1031.08V360.5H1032.57V356.8H1034.07V355.0H1035.56V353.2H1037.05V355.6H1038.55V351.3H1040.04V349.5H1041.53V339.7H1043.03V340.3H1044.52V343.4H1046.01V329.9H1047.51V329.9H1049.00V333.0H1050.49V316.5H1051.99V328.1H1053.48V299.4H1054.97V316.5H1056.47V298.8H1057.96V298.8H1059.45V293.3H1060.95V271.3H1062.44V270.7H1063.93V275.6H1065.43V256.6H1066.92V251.1H1068.41V252.9H1069.91V264.6H1071.40V240.1H1072.89V240.1H1074.39V216.9H1075.88V252.9H1077.37V222.4H1078.87V234.0H1080.36V199.2H1081.85V219.3H1083.35V224.8H1084.84V209.6H1086.33V218.7H1087.83V239.5H1089.32V227.9H1090.81V214.5H1092.31V257.8H1093.80V254.2H1095.29V268.8H1096.79V251.1H1098.28V271.9H1099.77V270.7H1101.27V285.3H1102.76V295.7H1104.25V279.8H1105.75V294.5H1107.24V296.9H1108.73V311.0H1110.23V328.1H1111.72V326.9H1113.21V342.2H1114.71V345.2H1116.20V351.3H1117.69V343.4H1119.19V355.6H1120.68V363.5H1122.17V372.1H1123.67V373.3H1125.16V373.9H1126.65V369.0H1128.15V378.8H1129.64V386.8H1131.13V388.0H1132.63V384.3H1134.12V393.5H1135.61V390.4H1137.11V396.5H1138.60V398.4H1140.09V399.6H1141.59V400.8H1143.08V402.0H1144.57V399.6H1146.07V404.5H1147.56V403.3H1149.05V403.9H1150.55V403.9H1152.04V405.1H1153.53V401.4H1155.03V403.3H1156.52V405.7ZM1158.01 405.7V405.1H1159.51V405.1H1161.00V405.7Z" fill="#e80000"/>
<rect x="1161" y="404.800" width="224" height="1" fill="#6aa6cf"/>
<path d="M1019.6 99.4V405" stroke="#e57373" stroke-width="1.150" stroke-dasharray="2.800 2.200" fill="none"/>
<path d="M1161.3 99.4V405" stroke="#e57373" stroke-width="1.150" stroke-dasharray="2.800 2.200" fill="none"/>
<path d="M265.00 783.6V677.8H265.80V681.1H266.60V680.8H267.40V681.4H268.20V681.9H269.00V680.7H269.80V679.8H270.60V685.3H271.40V682.6H272.20V681.9H273.00V686.1H273.80V685.2H274.60V678.5H275.40V678.5H276.20V679.1H277.00V681.3H277.80V679.7H278.60V680.5H279.40V678.2H280.20V654.2H281.00V657.0H281.80V681.2H282.60V680.2H283.40V680.2H284.20V682.8H285.00V678.2H285.80V680.7H286.60V679.9H287.40V678.3H288.20V681.6H289.00V682.5H289.80V681.6H290.60V678.0H291.40V678.7H292.20V677.6H293.00V680.7H293.80V681.8H294.60V675.1H295.40V676.0H296.20V680.3H297.00V680.7H297.80V679.5H298.60V677.9H299.40V678.1H300.20V677.8H301.00V679.7H301.80V677.6H302.60V681.5H303.40V680.3H304.20V679.6H305.00V679.9H305.80V679.0H306.60V676.6H307.40V680.0H308.20V677.2H309.00V680.4H309.80V677.1H310.60V678.3H311.40V677.2H312.20V678.3H313.00V675.2H313.80V678.4H314.60V681.6H315.40V677.0H316.20V677.5H317.00V678.4H317.80V680.7H318.60V677.9H319.40V680.0H320.20V678.1H321.00V678.8H321.80V678.3H322.60V678.8H323.40V677.9H324.20V678.5H325.00V675.8H325.80V678.8H326.60V678.3H327.40V677.5H328.20V677.8H329.00V677.2H329.80V677.6H330.60V676.5H331.40V678.9H332.20V679.7H333.00V676.7H333.80V682.0H334.60V679.4H335.40V677.6H336.20V678.9H337.00V675.5H337.80V675.4H338.60V678.3H339.40V676.4H340.20V678.6H341.00V676.6H341.80V679.3H342.60V677.3H343.40V677.7H344.20V677.1H345.00V679.5H345.80V677.4H346.60V678.4H347.40V677.3H348.20V677.8H349.00V677.2H349.80V677.7H350.60V674.9H351.40V674.7H352.20V674.6H353.00V675.2H353.80V679.0H354.60V678.9H355.40V678.5H356.20V674.4H357.00V676.2H357.80V676.4H358.60V675.1H359.40V674.8H360.20V682.5H361.00V674.3H361.80V672.3H362.60V673.0H363.40V673.9H364.20V672.2H365.00V674.1H365.80V675.2H366.60V672.5H367.40V668.3H368.20V670.2H369.00V668.6H369.80V666.7H370.60V669.7H371.40V670.0H372.20V670.7H373.00V668.7H373.80V669.3H374.60V670.1H375.40V665.3H376.20V670.4H377.00V669.7H377.80V667.4H378.60V667.0H379.40V670.4H380.20V667.9H381.00V669.4H381.80V667.9H382.60V668.8H383.40V668.0H384.20V668.9H385.00V670.8H385.80V671.8H386.60V670.0H387.40V668.8H388.20V669.2H389.00V669.8H389.80V670.1H390.60V667.9H391.40V669.8H392.20V671.0H393.00V671.7H393.80V671.4H394.60V670.1H395.40V670.2H396.20V672.4H397.00V668.0H397.80V668.9H398.60V669.0H399.40V670.9H400.20V673.2H401.00V672.3H401.80V670.6H402.60V669.0H403.40V673.6H404.20V671.0H405.00V672.6H405.80V670.6H406.60V671.2H407.40V670.5H408.20V672.0H409.00V672.9H409.80V672.4H410.60V672.1H411.40V670.3H412.20V673.7H413.00V671.4H413.80V670.2H414.60V677.7H415.40V672.7H416.20V674.5H417.00V670.9H417.80V672.3H418.60V671.0H419.40V674.9H420.20V671.6H421.00V672.0H421.80V675.3H422.60V667.6H423.40V673.4H424.20V673.8H425.00V671.8H425.80V675.6H426.60V673.3H427.40V672.9H428.20V673.7H429.00V673.3H429.80V675.3H430.60V676.1H431.40V672.6H432.20V674.7H433.00V672.1H433.80V673.8H434.60V674.3H435.40V673.4H436.20V670.4H437.00V674.6H437.80V673.5H438.60V672.8H439.40V671.0H440.20V673.5H441.00V673.4H441.80V675.8H442.60V672.4H443.40V674.1H444.20V673.6H445.00V675.1H445.80V672.9H446.60V674.7H447.40V674.5H448.20V679.8H449.00V674.4H449.80V676.5H450.60V676.0H451.40V673.6H452.20V670.8H453.00V673.6H453.80V677.3H454.60V675.9H455.40V677.6H456.20V677.6H457.00V673.8H457.80V674.9H458.60V672.5H459.40V677.0H460.20V674.7H461.00V675.6H461.80V672.4H462.60V674.7H463.40V674.0H464.20V672.6H465.00V674.6H465.80V673.4H466.60V671.6H467.40V673.8H468.20V674.2H469.00V675.9H469.80V675.6H470.60V674.7H471.40V673.6H472.20V673.2H473.00V673.7H473.80V675.2H474.60V672.9H475.40V673.7H476.20V673.1H477.00V674.0H477.80V673.2H478.60V671.8H479.40V673.2H480.20V673.4H481.00V672.1H481.80V672.3H482.60V671.0H483.40V671.9H484.20V670.4H485.00V673.8H485.80V668.8H486.60V672.7H487.40V670.5H488.20V673.6H489.00V672.1H489.80V670.2H490.60V671.3H491.40V671.6H492.20V679.2H493.00V670.0H493.80V670.8H494.60V669.8H495.40V671.7H496.20V671.5H497.00V670.2H497.80V669.3H498.60V668.8H499.40V676.3H500.20V674.1H501.00V678.6H501.80V678.2H502.60V678.2H503.40V677.8H504.20V678.9H505.00V678.7H505.80V676.2H506.60V675.5H507.40V678.1H508.20V676.0H509.00V678.6H509.80V675.9H510.60V679.6H511.40V680.2H512.20V678.2H513.00V677.1H513.80V680.9H514.60V680.2H515.40V679.1H516.20V680.0H517.00V678.6H517.80V679.8H518.60V679.2H519.40V678.4H520.20V676.4H521.00V679.4H521.80V678.9H522.60V678.3H523.40V680.6H524.20V678.9H525.00V679.3H525.80V680.9H526.60V679.9H527.40V681.6H528.20V683.2H529.00V663.9H529.80V661.1H530.60V685.2H531.40V685.2H532.20V687.7H533.00V686.0H533.80V686.9H534.60V685.8H535.40V684.6H536.20V687.4H537.00V686.4H537.80V687.8H538.60V686.8H539.40V687.6H540.20V687.2H541.00V687.4H541.80V687.7H542.60V689.4H543.40V687.1H544.20V688.1H545.00V691.2H545.80V688.6H546.60V687.9H547.40V693.2H548.20V699.1H549.00V685.5H549.80V692.4H550.60V689.8H551.40V692.3H552.20V690.1H553.00V692.9H553.80V689.2H554.60V695.1H555.40V695.6H556.20V692.7H557.00V692.7H557.80V693.9H558.60V691.7H559.40V690.4H560.20V693.8H561.00V689.4H561.80V691.4H562.60V693.1H563.40V690.0H564.20V691.7H565.00V693.3H565.80V691.3H566.60V692.1H567.40V690.6H568.20V692.5H569.00V689.9H569.80V692.1H570.60V693.1H571.40V691.7H572.20V697.8H573.00V693.1H573.80V692.2H574.60V692.8H575.40V688.5H576.20V691.2H577.00V692.3H577.80V681.9H578.60V634.2H579.40V635.3H580.20V686.3H581.00V678.1H581.80V623.5H582.60V624.9H583.40V688.1H584.20V694.5H585.00V695.5H585.80V693.5H586.60V689.7H587.40V692.2H588.20V693.4H589.00V694.4H589.80V693.6H590.60V690.4H591.40V689.0H592.20V690.7H593.00V691.8H593.80V695.4H594.60V689.0H595.40V692.9H596.20V692.1H597.00V690.2H597.80V694.7H598.60V689.2H599.40V683.4H600.20V590.7H601.20V573.4H602.20V575.6H603.20V689.9H604.20V703.1H605.20V705.8H606.20V708.7H607.20V708.7H608.20V710.3H609.20V712.0H610.20V710.3H611.20V707.2H612.20V703.1H613.20V705.8H614.20V703.1H615.20V713.9H616.20V713.9H617.20V707.2H618.20V712.0H619.20V717.9H620.20V713.9H621.20V708.7H622.20V710.3H623.20V708.7H624.20V712.0H625.20V712.0H626.20V712.0H627.20V713.9H628.20V722.8H629.20V720.2H630.20V713.9H631.20V717.9H632.20V705.0H633.20V596.4H634.20V594.4H635.20V682.5H636.20V705.0H637.20V720.2H638.20V715.8H639.20V713.9H640.20V717.9H641.20V713.9H642.20V720.2H643.20V720.2H644.20V720.2H645.20V728.6H646.20V725.5H647.20V732.2H648.20V725.5H649.20V732.2H650.20V728.6H651.20V732.2H652.20V725.5H653.20V728.6H654.20V736.2H655.20V736.2H656.20V728.6H657.20V732.2H658.20V725.5H659.20V732.2H660.20V728.6H661.20V732.2H662.20V736.2H663.20V741.1H664.20V728.6H665.20V728.6H666.20V732.2H667.20V732.2H668.20V736.2H669.20V732.2H670.20V732.2H671.20V741.1H672.20V728.6H673.20V741.1H674.20V741.1H675.20V736.2H676.20V741.1H677.20V725.5H678.20V736.2H679.20V741.1H680.20V741.1H681.20V741.1H682.20V736.2H683.20V736.2H684.20V732.2H685.20V741.1H686.20V736.2H687.20V732.2H688.20V736.2H689.20V725.5H690.20V732.2H691.20V732.2H692.20V736.2H693.20V732.2H694.20V736.2H695.20V736.2H696.20V732.2H697.20V736.2H698.20V732.2H699.20V728.6H700.20V732.2H701.60V717.9H703.00V736.2H704.40V736.2H705.80V706.6H707.20V681.9H708.60V586.3H710.00V600.9H711.40V647.0H712.80V736.2H714.20V741.1H715.60V725.5H717.00V747.0H718.40V754.6H719.80V736.2H721.20V736.2H722.60V736.2H724.00V736.2H725.40V736.2H726.80V728.6H728.20V741.1H729.60V741.1H731.00V728.6H732.40V741.1H733.80V736.2H735.20V725.5H736.60V728.6H738.00V741.1H739.40V732.2H740.80V736.2H742.20V720.2H743.60V732.2H745.00V736.2H746.40V741.1H747.80V732.2H749.20V722.8H750.60V732.2H752.00V732.2H753.40V747.0H754.80V728.6H756.20V747.0H757.60V741.1H759.00V725.5H760.40V741.1H761.80V736.2H763.20V732.2H764.60V728.6H766.00V741.1H767.40V736.2H768.80V754.6H770.20V732.2H771.60V736.2H773.00V736.2H774.40V741.1H775.80V736.2H777.20V741.1H778.60V741.1H780.00V741.1H781.40V717.9H782.80V732.2H784.20V747.0H785.60V741.1H787.00V736.2H788.40V736.2H789.80V732.2H791.20V754.6H792.60V736.2H794.00V732.2H795.40V736.2H796.80V732.2H798.20V736.2H799.60V741.1H801.00V741.1H802.40V732.2H803.80V741.1H805.20V754.6H806.60V741.1H808.00V741.1H809.40V725.5H810.80V741.1H812.20V732.2H813.60V741.1H815.00V765.3H816.40V732.2H817.80V732.2H819.20V736.2H820.60V754.6H822.00V725.5H823.40V747.0H824.80V765.3H826.20V736.2H827.60V736.2H829.00V747.0H830.40V747.0H831.80V732.2H833.20V747.0H834.60V741.1H836.00V741.1H837.40V747.0H838.80V728.6H840.20V754.6H841.60V736.2H843.00V732.2H844.40V701.9H845.80V741.1H847.20V732.2H848.60V754.6H850.00V747.0H851.40V741.1H852.80V725.5H854.20V728.6H855.60V754.6H857.00V736.2H858.40V747.0H859.80V747.0H861.20V741.1H862.60V741.1H864.00V736.2H865.40V736.2H866.80V747.0H868.20V747.0H869.60V747.0H871.00V747.0H872.40V754.6H873.80V754.6H875.20V741.1H876.60V747.0H878.00V754.6H879.40V741.1H880.80V741.1H882.20V754.6H883.60V747.0H885.00V754.6H886.40V747.0H887.80V754.6H889.20V765.3H890.60V736.2H892.00V741.1H893.40V747.0H894.80V747.0H896.20V747.0H897.60V747.0H899.00V747.0H900.40V747.0H901.80V747.0H903.20V754.6H904.60V741.1H906.00V747.0H907.40V754.6H908.80V747.0H910.20V754.6H911.60V736.2H913.00V754.6H914.40V754.6H915.80V736.2H917.20V689.9H918.60V741.1H920.00V729.3H921.40V713.5H922.80V747.0H924.20V747.0H925.60V754.6H927.00V754.6H928.40V741.1H929.80V728.6H931.20V747.0H932.60V765.3H934.00V754.6H935.40V728.6H936.80V730.0H938.20V754.6H939.60V741.1H941.00V754.6H942.40V754.6H943.80V736.2H945.20V765.3H946.60V765.3H948.00V765.3H949.40V741.1H950.80V747.0H952.20V754.6H953.60V783.6ZM955.00 783.6V754.6H956.40V783.6ZM959.20 783.6V741.1H960.60V765.3H962.00V783.6ZM964.80 783.6V765.3H966.20V783.6ZM969.00 783.6V765.3H970.40V783.6ZM971.80 783.6V765.3H973.20V783.6ZM974.60 783.6V765.3H976.00V754.6H977.40V783.6ZM984.40 783.6V765.3H985.80V754.6H987.20V783.6ZM989.45 783.6V765.3H990.75V783.6ZM993.75 783.6V765.3H995.05V783.6ZM996.55 783.6V754.6H997.85V783.6ZM1003.05 783.6V765.3H1004.35V783.6ZM1010.80 783.6V765.3H1012.80V783.6ZM1021.05 783.6V765.3H1022.35V783.6ZM1023.55 783.6V765.3H1024.85V783.6ZM1027.35 783.6V680.8H1028.85V783.6ZM1027.60 783.6V688.9H1030.20V783.6ZM1035.90 783.6V754.6H1037.30V783.6ZM1041.65 783.6V765.3H1042.95V783.6ZM1046.95 783.6V671.7H1048.25V783.6ZM1047.00 783.6V681.3H1049.60V783.6ZM1051.25 783.6V736.2H1052.75V783.6ZM1050.10 783.6V754.6H1052.70V783.6ZM1054.85 783.6V765.3H1056.15V783.6ZM1057.65 783.6V765.3H1058.95V783.6ZM1108.30 783.6V765.3H1109.70V783.6ZM1132.90 783.6V765.3H1134.70V783.6ZM1183.60 783.6V754.6H1185.40V783.6ZM1183.70 783.6V765.3H1185.90V783.6ZM1220.20 783.6V765.3H1221.40V783.6ZM1366.50 783.6V765.3H1367.90V783.6ZM1366.45 783.6V747.0H1367.15V783.6Z" fill="#7bbde8"/>
<rect x="1060" y="783" width="325" height="1" fill="#6aa6cf"/>
<rect x="261.4" y="99.5" width="2.6" height="1" fill="#e4e4e4"/>
<rect x="261.4" y="160.5" width="2.6" height="1" fill="#e4e4e4"/>
<rect x="261.4" y="221.5" width="2.6" height="1" fill="#e4e4e4"/>
<rect x="261.4" y="282.5" width="2.6" height="1" fill="#e4e4e4"/>
<rect x="261.4" y="343.5" width="2.6" height="1" fill="#e4e4e4"/>
<rect x="261.4" y="404.5" width="2.6" height="1" fill="#e4e4e4"/>
<rect x="402.3" y="405.4" width="1" height="2" fill="#e4e4e4"/>
<rect x="541.6" y="405.4" width="1" height="2" fill="#e4e4e4"/>
<rect x="682.0" y="405.4" width="1" height="2" fill="#e4e4e4"/>
<rect x="822.1" y="405.4" width="1" height="2" fill="#e4e4e4"/>
<rect x="963.0" y="405.4" width="1" height="2" fill="#e4e4e4"/>
<rect x="1104.4" y="405.4" width="1" height="2" fill="#e4e4e4"/>
<rect x="1246.0" y="405.4" width="1" height="2" fill="#e4e4e4"/>
<rect x="260.8" y="783.1" width="3.2" height="1" fill="#e4e4e4"/>
<rect x="262.0" y="764.8" width="2.0" height="1" fill="#e4e4e4"/>
<rect x="262.0" y="754.1" width="2.0" height="1" fill="#e4e4e4"/>
<rect x="262.0" y="746.5" width="2.0" height="1" fill="#e4e4e4"/>
<rect x="262.0" y="740.6" width="2.0" height="1" fill="#e4e4e4"/>
<rect x="262.0" y="735.7" width="2.0" height="1" fill="#e4e4e4"/>
<rect x="262.0" y="731.7" width="2.0" height="1" fill="#e4e4e4"/>
<rect x="262.0" y="728.1" width="2.0" height="1" fill="#e4e4e4"/>
<rect x="262.0" y="725.0" width="2.0" height="1" fill="#e4e4e4"/>
<rect x="260.8" y="722.2" width="3.2" height="1" fill="#e4e4e4"/>
<rect x="262.0" y="703.9" width="2.0" height="1" fill="#e4e4e4"/>
<rect x="262.0" y="693.2" width="2.0" height="1" fill="#e4e4e4"/>
<rect x="262.0" y="685.6" width="2.0" height="1" fill="#e4e4e4"/>
<rect x="262.0" y="679.7" width="2.0" height="1" fill="#e4e4e4"/>
<rect x="262.0" y="674.9" width="2.0" height="1" fill="#e4e4e4"/>
<rect x="262.0" y="670.8" width="2.0" height="1" fill="#e4e4e4"/>
<rect x="262.0" y="667.3" width="2.0" height="1" fill="#e4e4e4"/>
<rect x="262.0" y="664.2" width="2.0" height="1" fill="#e4e4e4"/>
<rect x="260.8" y="661.4" width="3.2" height="1" fill="#e4e4e4"/>
<rect x="262.0" y="643.1" width="2.0" height="1" fill="#e4e4e4"/>
<rect x="262.0" y="632.4" width="2.0" height="1" fill="#e4e4e4"/>
<rect x="262.0" y="624.8" width="2.0" height="1" fill="#e4e4e4"/>
<rect x="262.0" y="618.9" width="2.0" height="1" fill="#e4e4e4"/>
<rect x="262.0" y="614.0" width="2.0" height="1" fill="#e4e4e4"/>
<rect x="262.0" y="610.0" width="2.0" height="1" fill="#e4e4e4"/>
<rect x="262.0" y="606.4" width="2.0" height="1" fill="#e4e4e4"/>
<rect x="262.0" y="603.3" width="2.0" height="1" fill="#e4e4e4"/>
<rect x="260.8" y="600.5" width="3.2" height="1" fill="#e4e4e4"/>
<rect x="262.0" y="582.2" width="2.0" height="1" fill="#e4e4e4"/>
<rect x="262.0" y="571.5" width="2.0" height="1" fill="#e4e4e4"/>
<rect x="262.0" y="563.9" width="2.0" height="1" fill="#e4e4e4"/>
<rect x="262.0" y="558.0" width="2.0" height="1" fill="#e4e4e4"/>
<rect x="262.0" y="553.2" width="2.0" height="1" fill="#e4e4e4"/>
<rect x="262.0" y="549.1" width="2.0" height="1" fill="#e4e4e4"/>
<rect x="262.0" y="545.6" width="2.0" height="1" fill="#e4e4e4"/>
<rect x="262.0" y="542.5" width="2.0" height="1" fill="#e4e4e4"/>
<rect x="260.8" y="539.7" width="3.2" height="1" fill="#e4e4e4"/>
<rect x="262.0" y="521.4" width="2.0" height="1" fill="#e4e4e4"/>
<rect x="262.0" y="510.7" width="2.0" height="1" fill="#e4e4e4"/>
<rect x="262.0" y="503.1" width="2.0" height="1" fill="#e4e4e4"/>
<rect x="262.0" y="497.2" width="2.0" height="1" fill="#e4e4e4"/>
<rect x="262.0" y="492.3" width="2.0" height="1" fill="#e4e4e4"/>
<rect x="262.0" y="488.3" width="2.0" height="1" fill="#e4e4e4"/>
<rect x="262.0" y="484.7" width="2.0" height="1" fill="#e4e4e4"/>
<rect x="262.0" y="481.6" width="2.0" height="1" fill="#e4e4e4"/>
<rect x="260.8" y="478.9" width="3.2" height="1" fill="#e4e4e4"/>
<rect x="402.7" y="783.8" width="1" height="2" fill="#e4e4e4"/>
<rect x="542.9" y="783.8" width="1" height="2" fill="#e4e4e4"/>
<rect x="683.0" y="783.8" width="1" height="2" fill="#e4e4e4"/>
<rect x="823.2" y="783.8" width="1" height="2" fill="#e4e4e4"/>
<rect x="963.4" y="783.8" width="1" height="2" fill="#e4e4e4"/>
<rect x="1103.5" y="783.8" width="1" height="2" fill="#e4e4e4"/>
<rect x="1243.7" y="783.8" width="1" height="2" fill="#e4e4e4"/>
<rect x="1383.9" y="783.8" width="1" height="2" fill="#e4e4e4"/>
<text x="1031.2" y="133.2" transform="rotate(-90 1031.2 133.2)" font-family='Liberation Sans' font-size="10" fill="#d86c6c" textLength="27.4" lengthAdjust="spacingAndGlyphs">1350.1</text>
<text x="1172.8" y="133.2" transform="rotate(-90 1172.8 133.2)" font-family='Liberation Sans' font-size="10" fill="#d86c6c" textLength="27.4" lengthAdjust="spacingAndGlyphs">1602.3</text>
</svg>
<svg class="ab" style="left:1407.8px;top:79.0px" width="22" height="22" viewBox="0 0 22 22"><circle cx="11" cy="11" r="10.900" fill="#fcb913"/><path d="M7 7L15 15M15 7L7 15" stroke="#3f5f8c" stroke-width="1.600" stroke-linecap="butt"/></svg>
<svg class="ab" style="left:1407.2px;top:107.6px" width="24" height="24" viewBox="0 0 24 24"><path d="M11.400 4.200H3.600Q1.800 4.200 1.800 6V19.600Q1.800 21.400 3.600 21.400H17.200Q19 21.400 19 19.600V12.400" fill="none" stroke="#5f7d8c" stroke-width="1.900"/><path d="M12 12.200L18.600 5.400" stroke="#fcb913" stroke-width="2.600"/><path d="M22.400 1.400H14.800L22.400 9Z" fill="#fcb913"/><path d="M8.200 15.800H15.600L8.200 8.400Z" fill="#fcb913"/></svg>
<div class="ab" style="left:1409.400px;top:137.3px;width:19px;height:2px;background:linear-gradient(#7f8490 0,#7f8490 50%,#dfe2e6 50%,#dfe2e6 100%)"></div>
<svg class="ab" style="left:1407.8px;top:146.4px" width="22" height="20" viewBox="0 0 22 20"><path d="M1.6 1.6H6.2L11.4 10 6.2 18.4H1.6L6.8 10Z" fill="#9fcf9f"/><path d="M10.6 1.6H15.2L20.4 10 15.2 18.4H10.6L15.8 10Z" fill="#9fcf9f"/></svg>
<svg class="ab" style="left:1407.8px;top:175.0px" width="22" height="22" viewBox="0 0 22 22"><rect x="1.2" y="1.2" width="19.6" height="19.6" rx="2" fill="#f44336"/><rect x="8.200" y="8.200" width="5.600" height="5.600" fill="#e6ecef"/></svg>
<svg class="ab" style="left:1407.8px;top:204.6px" width="22" height="22" viewBox="0 0 22 22"><path d="M7.6 1.2h6.8v2.2h-1.2v-1.2h-4.4v1.2h-1.2z" fill="#9ca8b3"/><path d="M2.4 3.2Q1.2 3.2 1.2 4.6V7.8H20.8V4.6Q20.8 3.2 19.6 3.2Z" fill="#9ca8b3"/><path d="M3.6 8.6H18.4L17.6 19.4Q17.5 20.8 16.2 20.8H5.8Q4.5 20.8 4.4 19.4Z" fill="#c6cbd3"/><path d="M7.6 10.6V18.4M11 10.6V18.4M14.4 10.6V18.4" stroke="#8f9ba8" stroke-width="1.5"/></svg>
<div class="ab" style="left:1409.400px;top:233.1px;width:19px;height:2px;background:linear-gradient(#7f8490 0,#7f8490 50%,#dfe2e6 50%,#dfe2e6 100%)"></div>
<svg class="ab" style="left:1407.0px;top:240.0px" width="24" height="24" viewBox="0 0 24 24"><g stroke="#4f6f8c" stroke-width="1.300"><path d="M0.6 4.2H23.4M0.6 12H23.4M0.6 19.8H23.4"/></g><rect x="5.6" y="1.8" width="3.6" height="4.8" rx="1.4" fill="#fcb913"/><circle cx="14.2" cy="4.2" r="2.5" fill="#43a047"/><circle cx="18.6" cy="4.2" r="2.5" fill="#43a047"/><circle cx="6.2" cy="12" r="2.5" fill="#43a047"/><circle cx="12" cy="12" r="2.6" fill="#fcb913"/><circle cx="15.8" cy="12" r="2.6" fill="#fcb913"/><circle cx="19.6" cy="12" r="2.6" fill="#fcb913"/><circle cx="4.6" cy="19.8" r="2.6" fill="#2196f3"/><circle cx="12.4" cy="19.8" r="2.6" fill="#2196f3"/><circle cx="18.6" cy="19.8" r="2.6" fill="#2196f3"/></svg>
<svg class="ab" style="left:1407.8px;top:457.6px" width="22" height="22" viewBox="0 0 22 22"><circle cx="11" cy="11" r="10.900" fill="#fcb913"/><path d="M7 7L15 15M15 7L7 15" stroke="#3f5f8c" stroke-width="1.600" stroke-linecap="butt"/></svg>
<svg class="ab" style="left:1407.2px;top:486.2px" width="24" height="24" viewBox="0 0 24 24"><path d="M11.400 4.200H3.600Q1.800 4.200 1.800 6V19.600Q1.800 21.400 3.600 21.400H17.200Q19 21.400 19 19.600V12.400" fill="none" stroke="#5f7d8c" stroke-width="1.900"/><path d="M12 12.200L18.600 5.400" stroke="#fcb913" stroke-width="2.600"/><path d="M22.400 1.400H14.800L22.400 9Z" fill="#fcb913"/><path d="M8.200 15.800H15.600L8.200 8.400Z" fill="#fcb913"/></svg>
<div class="ab" style="left:1409.400px;top:515.9px;width:19px;height:2px;background:linear-gradient(#7f8490 0,#7f8490 50%,#dfe2e6 50%,#dfe2e6 100%)"></div>
<svg class="ab" style="left:1407.8px;top:525.0px" width="22" height="20" viewBox="0 0 22 20"><path d="M1.6 1.6H6.2L11.4 10 6.2 18.4H1.6L6.8 10Z" fill="#43b649"/><path d="M10.6 1.6H15.2L20.4 10 15.2 18.4H10.6L15.8 10Z" fill="#43b649"/></svg>
<svg class="ab" style="left:1407.8px;top:553.6px" width="22" height="22" viewBox="0 0 22 22"><rect x="1.2" y="1.2" width="19.6" height="19.6" rx="2" fill="#e28a8a"/><rect x="8.200" y="8.200" width="5.600" height="5.600" fill="#e6dede"/></svg>
<svg class="ab" style="left:1407.8px;top:583.2px" width="22" height="22" viewBox="0 0 22 22"><path d="M7.6 1.2h6.8v2.2h-1.2v-1.2h-4.4v1.2h-1.2z" fill="#5a7888"/><path d="M2.4 3.2Q1.2 3.2 1.2 4.6V7.8H20.8V4.6Q20.8 3.2 19.6 3.2Z" fill="#5a7888"/><path d="M3.6 8.6H18.4L17.6 19.4Q17.5 20.8 16.2 20.8H5.8Q4.5 20.8 4.4 19.4Z" fill="#eceff1"/><path d="M7.6 10.6V18.4M11 10.6V18.4M14.4 10.6V18.4" stroke="#5a7888" stroke-width="1.5"/></svg>
<div class="ab" style="left:1409.400px;top:611.7px;width:19px;height:2px;background:linear-gradient(#7f8490 0,#7f8490 50%,#dfe2e6 50%,#dfe2e6 100%)"></div>
<svg class="ab" style="left:1407.0px;top:618.6px" width="24" height="24" viewBox="0 0 24 24"><g stroke="#4f6f8c" stroke-width="1.300"><path d="M0.6 4.2H23.4M0.6 12H23.4M0.6 19.8H23.4"/></g><rect x="5.6" y="1.8" width="3.6" height="4.8" rx="1.4" fill="#fcb913"/><circle cx="14.2" cy="4.2" r="2.5" fill="#43a047"/><circle cx="18.6" cy="4.2" r="2.5" fill="#43a047"/><circle cx="6.2" cy="12" r="2.5" fill="#43a047"/><circle cx="12" cy="12" r="2.6" fill="#fcb913"/><circle cx="15.8" cy="12" r="2.6" fill="#fcb913"/><circle cx="19.6" cy="12" r="2.6" fill="#fcb913"/><circle cx="4.6" cy="19.8" r="2.6" fill="#2196f3"/><circle cx="12.4" cy="19.8" r="2.6" fill="#2196f3"/><circle cx="18.6" cy="19.8" r="2.6" fill="#2196f3"/></svg>
<div class="ab" style="left:0;top:832.800px;width:1440px;height:19.200px;background:#2d2d2f"></div>
<div class="ab" style="left:0;top:832.800px;width:1440px;height:6.400px;background:linear-gradient(#2a2e3a 0%,#323746 40%,#3c414f 100%)"></div>
<div class="ab" style="left:1375.5px;top:836px;width:1px;height:16px;background:#55585f"></div>
<div class="ab" style="left:1393.3px;top:836px;width:1px;height:16px;background:#55585f"></div>
<div class="ab" style="left:1424.5px;top:836px;width:1px;height:16px;background:#55585f"></div>
<span class="tx" id="t0" style="left:20.30px;top:4.00px;color:#ffffff;font-size:12px;letter-spacing:-0.167px;">Detectors - LVis</span>
<span class="tx" id="t1" style="left:13.50px;top:26.00px;color:#ececec;font-size:11.46px;letter-spacing:-0.500px;">File</span>
<span class="tx" id="t2" style="left:40.90px;top:26.00px;color:#ececec;font-size:11.46px;letter-spacing:-0.700px;">View</span>
<span class="tx" id="t3" style="left:75.50px;top:26.00px;color:#ececec;font-size:11.46px;letter-spacing:-0.340px;">Window</span>
<span class="tx" id="t4" style="left:124.50px;top:26.00px;color:#ececec;font-size:11.46px;letter-spacing:-0.243px;">Settings</span>
<span class="tx" id="t5" style="left:172.50px;top:26.00px;color:#ececec;font-size:11.46px;letter-spacing:-0.200px;">Editors</span>
<span class="tx" id="t6" style="left:215.00px;top:26.00px;color:#ececec;font-size:11.46px;letter-spacing:-0.040px;">Logoff</span>
<span class="tx" id="t7" style="left:255.60px;top:26.00px;color:#ececec;font-size:11.46px;letter-spacing:-0.380px;">Lab Journal</span>
<span class="tx" id="t8" style="left:322.05px;top:26.00px;color:#ececec;font-size:11.46px;letter-spacing:0.000px;">?</span>
<span class="tx" id="t9" style="left:3.80px;top:52.00px;color:#2b3242;font-size:11.74px;letter-spacing:-0.325px;font-weight:bold;">Configuration</span>
<span class="tx" id="t10" style="left:34.60px;top:73.00px;color:#ececec;font-size:12px;letter-spacing:0.000px;">Buffer</span>
<span class="tx" id="t11" style="left:34.60px;top:90.00px;color:#f2f2f2;font-size:12px;letter-spacing:-0.067px;">Food</span>
<span class="tx" id="t12" style="left:64.90px;top:90.00px;color:#f2f2f2;font-size:12px;letter-spacing:0.414px;">Monitor:</span>
<span class="tx" id="t13" style="left:112.10px;top:90.00px;color:#f2f2f2;font-size:12px;letter-spacing:-0.067px;">Food</span>
<span class="tx" id="t14" style="left:142.00px;top:90.00px;color:#f2f2f2;font-size:12px;letter-spacing:0.083px;width:54.2px;overflow:hidden;">Monitor_QAEff</span>
<span class="tx" id="t15" style="left:49.20px;top:108.00px;color:#ececec;font-size:12px;letter-spacing:0.340px;">Liquid food</span>
<span class="tx" id="t16" style="left:64.40px;top:125.00px;color:#ececec;font-size:12px;letter-spacing:0.275px;">Marinelli</span>
<span class="tx" id="t17" style="left:64.40px;top:142.00px;color:#ececec;font-size:12px;letter-spacing:0.100px;">Pot</span>
<span class="tx" id="t18" style="left:49.20px;top:160.00px;color:#ececec;font-size:12px;letter-spacing:0.322px;">Solid food</span>
<span class="tx" id="t19" style="left:64.40px;top:177.00px;color:#ececec;font-size:12px;letter-spacing:0.275px;">Marinelli</span>
<span class="tx" id="t20" style="left:64.40px;top:194.00px;color:#ececec;font-size:12px;letter-spacing:0.100px;">Pot</span>
<span class="tx" id="t21" style="left:49.20px;top:212.00px;color:#ececec;font-size:12px;letter-spacing:-0.181px;">Quality Assurance</span>
<span class="tx" id="t22" style="left:64.40px;top:229.00px;color:#ececec;font-size:12px;letter-spacing:-0.238px;">ROI Background</span>
<span class="tx" id="t23" style="left:64.40px;top:246.00px;color:#ececec;font-size:12px;letter-spacing:-0.036px;">ROI Calibration</span>
<span class="tx" id="t24" style="left:34.60px;top:264.00px;color:#ececec;font-size:12px;letter-spacing:-0.375px;">HPGe (tRAYcy Det)</span>
<span class="tx" id="t25" style="left:49.20px;top:281.00px;color:#ececec;font-size:12px;letter-spacing:0.288px;">Marinelli</span>
<span class="tx" id="t26" style="left:64.40px;top:298.00px;color:#ececec;font-size:12px;letter-spacing:0.200px;">250ml</span>
<span class="tx" id="t27" style="left:64.40px;top:316.00px;color:#ececec;font-size:12px;letter-spacing:0.040px;">1000ml</span>
<span class="tx" id="t28" style="left:49.20px;top:333.00px;color:#ececec;font-size:12px;letter-spacing:-0.043px;">Cerbo100</span>
<span class="tx" id="t29" style="left:64.40px;top:350.00px;color:#ececec;font-size:12px;letter-spacing:0.000px;">Low</span>
<span class="tx" id="t30" style="left:64.40px;top:368.00px;color:#ececec;font-size:12px;letter-spacing:0.450px;">High</span>
<span class="tx" id="t31" style="left:49.20px;top:385.00px;color:#ececec;font-size:12px;letter-spacing:-0.181px;">Quality Assurance</span>
<span class="tx" id="t32" style="left:64.40px;top:402.00px;color:#ececec;font-size:12px;letter-spacing:0.022px;">Background</span>
<span class="tx" id="t33" style="left:64.40px;top:420.00px;color:#ececec;font-size:12px;letter-spacing:-0.300px;">Energy</span>
<span class="tx" id="t34" style="left:64.40px;top:437.00px;color:#ececec;font-size:12px;letter-spacing:-0.022px;">Efficiency</span>
<span class="tx" id="t35" style="left:26.10px;top:691.00px;color:#000000;font-size:11.5px;letter-spacing:-0.258px;font-weight:bold;">Configuration</span>
<span class="tx" id="t36" style="left:26.10px;top:715.00px;color:#262c3c;font-size:11.5px;letter-spacing:-0.419px;font-weight:bold;">Reference Sources</span>
<span class="tx" id="t37" style="left:26.10px;top:740.00px;color:#262c3c;font-size:11.5px;letter-spacing:-0.382px;font-weight:bold;">Analysis libraries</span>
<span class="tx" id="t38" style="left:26.10px;top:764.00px;color:#262c3c;font-size:11.5px;letter-spacing:-0.100px;font-weight:bold;">Materials</span>
<span class="tx" id="t39" style="left:26.10px;top:789.00px;color:#262c3c;font-size:11.5px;letter-spacing:-0.240px;font-weight:bold;">Sample container</span>
<span class="tx" id="t40" style="left:2.60px;top:838.00px;color:#e8e8e8;font-size:10.91px;letter-spacing:-0.125px;">Ready</span>
<span class="tx" id="t41" style="left:1378.50px;top:838.00px;color:#7d818c;font-size:10.62px;letter-spacing:-0.700px;">UF</span>
<span class="tx" id="t42" style="left:1396.60px;top:838.00px;color:#f0f0f0;font-size:11px;letter-spacing:0.450px;">NUM</span>
<span class="tx" id="t43" style="left:1427.50px;top:838.00px;color:#7d818c;font-size:9.86px;letter-spacing:-0.700px;">RF</span>
<span class="tx" id="t44" style="left:249.80px;top:50.00px;color:#000000;font-size:11.5px;letter-spacing:-0.150px;font-weight:bold;">Detectors</span>
<span class="tx" id="t45" style="left:209.70px;top:78.00px;color:#e4e4e4;font-size:12px;letter-spacing:-0.280px;">Counts</span>
<span class="tx" id="t46" style="left:267.60px;top:79.00px;color:#ffffff;font-size:12px;letter-spacing:-0.700px;font-weight:bold;">Food</span>
<span class="tx" id="t47" style="left:298.70px;top:79.00px;color:#ffffff;font-size:12px;letter-spacing:0.031px;font-weight:bold;">Monitor_QAEff_250825-1118_K-40</span>
<span class="tx" id="t48" style="left:496.40px;top:79.00px;color:#ffffff;font-size:12px;letter-spacing:-0.050px;font-weight:bold;">Marinelli</span>
<span class="tx" id="t49" style="left:547.80px;top:79.00px;color:#ffffff;font-size:12px;letter-spacing:-0.333px;font-weight:bold;">(ROI</span>
<span class="tx" id="t50" style="left:576.60px;top:79.00px;color:#ffffff;font-size:12px;letter-spacing:-0.373px;font-weight:bold;">Calibration)</span>
<span class="tx" id="t51" style="left:1162.80px;top:78.00px;color:#ffffff;font-size:12px;letter-spacing:-0.286px;">Channel:</span>
<span class="tx" id="t52" style="left:1210.85px;top:78.00px;color:#ffffff;font-size:12px;letter-spacing:0.000px;">1</span>
<span class="tx" id="t53" style="left:1226.20px;top:78.00px;color:#ffffff;font-size:12px;letter-spacing:-0.283px;">Energy:</span>
<span class="tx" id="t54" style="left:1266.80px;top:78.00px;color:#ffffff;font-size:12px;letter-spacing:-0.333px;">2.67</span>
<span class="tx" id="t55" style="left:1291.20px;top:78.00px;color:#ffffff;font-size:12px;letter-spacing:-0.500px;">keV</span>
<span class="tx" id="t56" style="left:1319.50px;top:78.00px;color:#ffffff;font-size:12px;letter-spacing:-0.383px;">Counts:</span>
<span class="tx" id="t57" style="left:1361.40px;top:78.00px;color:#ffffff;font-size:12px;letter-spacing:-0.300px;">142</span>
<span class="tx" id="t58" style="left:267.30px;top:104.00px;color:#7bbde8;font-size:12px;letter-spacing:-0.100px;font-weight:bold;">Food Monitor</span>
<span class="tx" id="t59" style="left:1249.50px;top:104.00px;color:#7fb2d9;font-size:12px;letter-spacing:-0.060px;">Start:</span>
<span class="tx" id="t60" style="left:1279.50px;top:104.00px;color:#7fb2d9;font-size:12px;letter-spacing:-0.522px;">25.08.2025</span>
<span class="tx" id="t61" style="left:1338.70px;top:104.00px;color:#7fb2d9;font-size:12px;letter-spacing:-0.500px;">11:18:40</span>
<span class="tx" id="t62" style="left:1257.20px;top:128.00px;color:#7fb2d9;font-size:12px;letter-spacing:0.033px;">Real time:</span>
<span class="tx" id="t63" style="left:1257.20px;top:144.00px;color:#7fb2d9;font-size:12px;letter-spacing:0.067px;">Live time:</span>
<span class="tx" id="t64" style="left:1257.20px;top:160.00px;color:#7fb2d9;font-size:12px;letter-spacing:0.178px;">Dead time:</span>
<span class="tx" id="t65" style="left:1353.50px;top:128.00px;color:#7fb2d9;font-size:12px;letter-spacing:-0.325px;">601 s</span>
<span class="tx" id="t66" style="left:1353.50px;top:144.00px;color:#7fb2d9;font-size:12px;letter-spacing:-0.325px;">600 s</span>
<span class="tx" id="t67" style="left:1362.20px;top:160.00px;color:#7fb2d9;font-size:12px;letter-spacing:-0.500px;">0 %</span>
<span class="tx" id="t68" style="left:239.30px;top:96.00px;color:#e4e4e4;font-size:12px;letter-spacing:-0.250px;">500</span>
<span class="tx" id="t69" style="left:240.10px;top:157.00px;color:#e4e4e4;font-size:12px;letter-spacing:-0.650px;">400</span>
<span class="tx" id="t70" style="left:239.30px;top:218.00px;color:#e4e4e4;font-size:12px;letter-spacing:-0.250px;">300</span>
<span class="tx" id="t71" style="left:239.30px;top:279.00px;color:#e4e4e4;font-size:12px;letter-spacing:-0.250px;">200</span>
<span class="tx" id="t72" style="left:239.50px;top:340.00px;color:#e4e4e4;font-size:12px;letter-spacing:-0.350px;">100</span>
<span class="tx" id="t73" style="left:243.80px;top:401.00px;color:#e4e4e4;font-size:12px;letter-spacing:-0.500px;">0.0</span>
<span class="tx" id="t74" style="left:393.00px;top:411.00px;color:#e4e4e4;font-size:12px;letter-spacing:-0.200px;">250</span>
<span class="tx" id="t75" style="left:532.30px;top:411.00px;color:#e4e4e4;font-size:12px;letter-spacing:-0.200px;">500</span>
<span class="tx" id="t76" style="left:672.70px;top:411.00px;color:#e4e4e4;font-size:12px;letter-spacing:-0.200px;">750</span>
<span class="tx" id="t77" style="left:809.60px;top:411.00px;color:#e4e4e4;font-size:12px;letter-spacing:0.000px;">1000</span>
<span class="tx" id="t78" style="left:950.50px;top:411.00px;color:#e4e4e4;font-size:12px;letter-spacing:0.000px;">1250</span>
<span class="tx" id="t79" style="left:1091.90px;top:411.00px;color:#e4e4e4;font-size:12px;letter-spacing:0.000px;">1500</span>
<span class="tx" id="t80" style="left:1233.50px;top:411.00px;color:#e4e4e4;font-size:12px;letter-spacing:0.000px;">1750</span>
<span class="tx" id="t81" style="left:1365.50px;top:429.00px;color:#e4e4e4;font-size:12px;letter-spacing:-0.700px;">keV</span>
<span class="tx" id="t82" style="left:209.70px;top:458.00px;color:#e4e4e4;font-size:12px;letter-spacing:-0.280px;">Counts</span>
<span class="tx" id="t83" style="left:1169.20px;top:457.00px;color:#ffffff;font-size:12px;letter-spacing:-0.343px;">Channel:</span>
<span class="tx" id="t84" style="left:1217.35px;top:457.00px;color:#ffffff;font-size:12px;letter-spacing:0.000px;">1</span>
<span class="tx" id="t85" style="left:1232.50px;top:457.00px;color:#ffffff;font-size:12px;letter-spacing:-0.333px;">Energy:</span>
<span class="tx" id="t86" style="left:1274.10px;top:457.00px;color:#ffffff;font-size:12px;letter-spacing:-0.600px;">0.38</span>
<span class="tx" id="t87" style="left:1297.40px;top:457.00px;color:#ffffff;font-size:12px;letter-spacing:-0.550px;">keV</span>
<span class="tx" id="t88" style="left:1326.20px;top:457.00px;color:#ffffff;font-size:12px;letter-spacing:-0.400px;">Counts:</span>
<span class="tx" id="t89" style="left:1367.55px;top:457.00px;color:#ffffff;font-size:12px;letter-spacing:0.450px;">36</span>
<span class="tx" id="t90" style="left:267.30px;top:484.00px;color:#7bbde8;font-size:12px;letter-spacing:-0.113px;font-weight:bold;">HPGe (tRAYcy Det)</span>
<span class="tx" id="t91" style="left:1249.50px;top:483.00px;color:#7fb2d9;font-size:12px;letter-spacing:-0.080px;">Start:</span>
<span class="tx" id="t92" style="left:1279.50px;top:483.00px;color:#7fb2d9;font-size:12px;letter-spacing:-0.500px;">22.08.2025</span>
<span class="tx" id="t93" style="left:1338.00px;top:483.00px;color:#7fb2d9;font-size:12px;letter-spacing:-0.429px;">11:22:03</span>
<span class="tx" id="t94" style="left:1257.20px;top:507.00px;color:#7fb2d9;font-size:12px;letter-spacing:0.033px;">Real time:</span>
<span class="tx" id="t95" style="left:1257.20px;top:522.00px;color:#7fb2d9;font-size:12px;letter-spacing:0.067px;">Live time:</span>
<span class="tx" id="t96" style="left:1257.20px;top:538.00px;color:#7fb2d9;font-size:12px;letter-spacing:0.178px;">Dead time:</span>
<span class="tx" id="t97" style="left:1353.80px;top:507.00px;color:#7fb2d9;font-size:12px;letter-spacing:-0.425px;">303 s</span>
<span class="tx" id="t98" style="left:1353.80px;top:522.00px;color:#7fb2d9;font-size:12px;letter-spacing:-0.425px;">300 s</span>
<span class="tx" id="t99" style="left:1362.10px;top:538.00px;color:#7fb2d9;font-size:12px;letter-spacing:-0.500px;">1 %</span>
<span class="tx" id="t100" style="left:221.20px;top:474.00px;color:#e4e4e4;font-size:12px;letter-spacing:-0.480px;">100000</span>
<span class="tx" id="t101" style="left:227.30px;top:535.00px;color:#e4e4e4;font-size:12px;letter-spacing:-0.375px;">10000</span>
<span class="tx" id="t102" style="left:233.30px;top:596.00px;color:#e4e4e4;font-size:12px;letter-spacing:-0.167px;">1000</span>
<span class="tx" id="t103" style="left:239.50px;top:656.00px;color:#e4e4e4;font-size:12px;letter-spacing:-0.350px;">100</span>
<span class="tx" id="t104" style="left:245.60px;top:717.00px;color:#e4e4e4;font-size:12px;letter-spacing:0.200px;">10</span>
<span class="tx" id="t105" style="left:244.20px;top:778.00px;color:#e4e4e4;font-size:12px;letter-spacing:-0.700px;">1.0</span>
<span class="tx" id="t106" style="left:393.40px;top:789.00px;color:#e4e4e4;font-size:12px;letter-spacing:-0.200px;">250</span>
<span class="tx" id="t107" style="left:533.57px;top:789.00px;color:#e4e4e4;font-size:12px;letter-spacing:-0.200px;">500</span>
<span class="tx" id="t108" style="left:673.74px;top:789.00px;color:#e4e4e4;font-size:12px;letter-spacing:-0.200px;">750</span>
<span class="tx" id="t109" style="left:810.71px;top:789.00px;color:#e4e4e4;font-size:12px;letter-spacing:0.000px;">1000</span>
<span class="tx" id="t110" style="left:950.88px;top:789.00px;color:#e4e4e4;font-size:12px;letter-spacing:0.000px;">1250</span>
<span class="tx" id="t111" style="left:1091.05px;top:789.00px;color:#e4e4e4;font-size:12px;letter-spacing:0.000px;">1500</span>
<span class="tx" id="t112" style="left:1231.22px;top:789.00px;color:#e4e4e4;font-size:12px;letter-spacing:0.000px;">1750</span>
<span class="tx" id="t113" style="left:1370.79px;top:789.00px;color:#e4e4e4;font-size:12px;letter-spacing:0.000px;">2000</span>
<span class="tx" id="t114" style="left:1365.50px;top:807.00px;color:#e4e4e4;font-size:12px;letter-spacing:-0.700px;">keV</span>
</body></html>
